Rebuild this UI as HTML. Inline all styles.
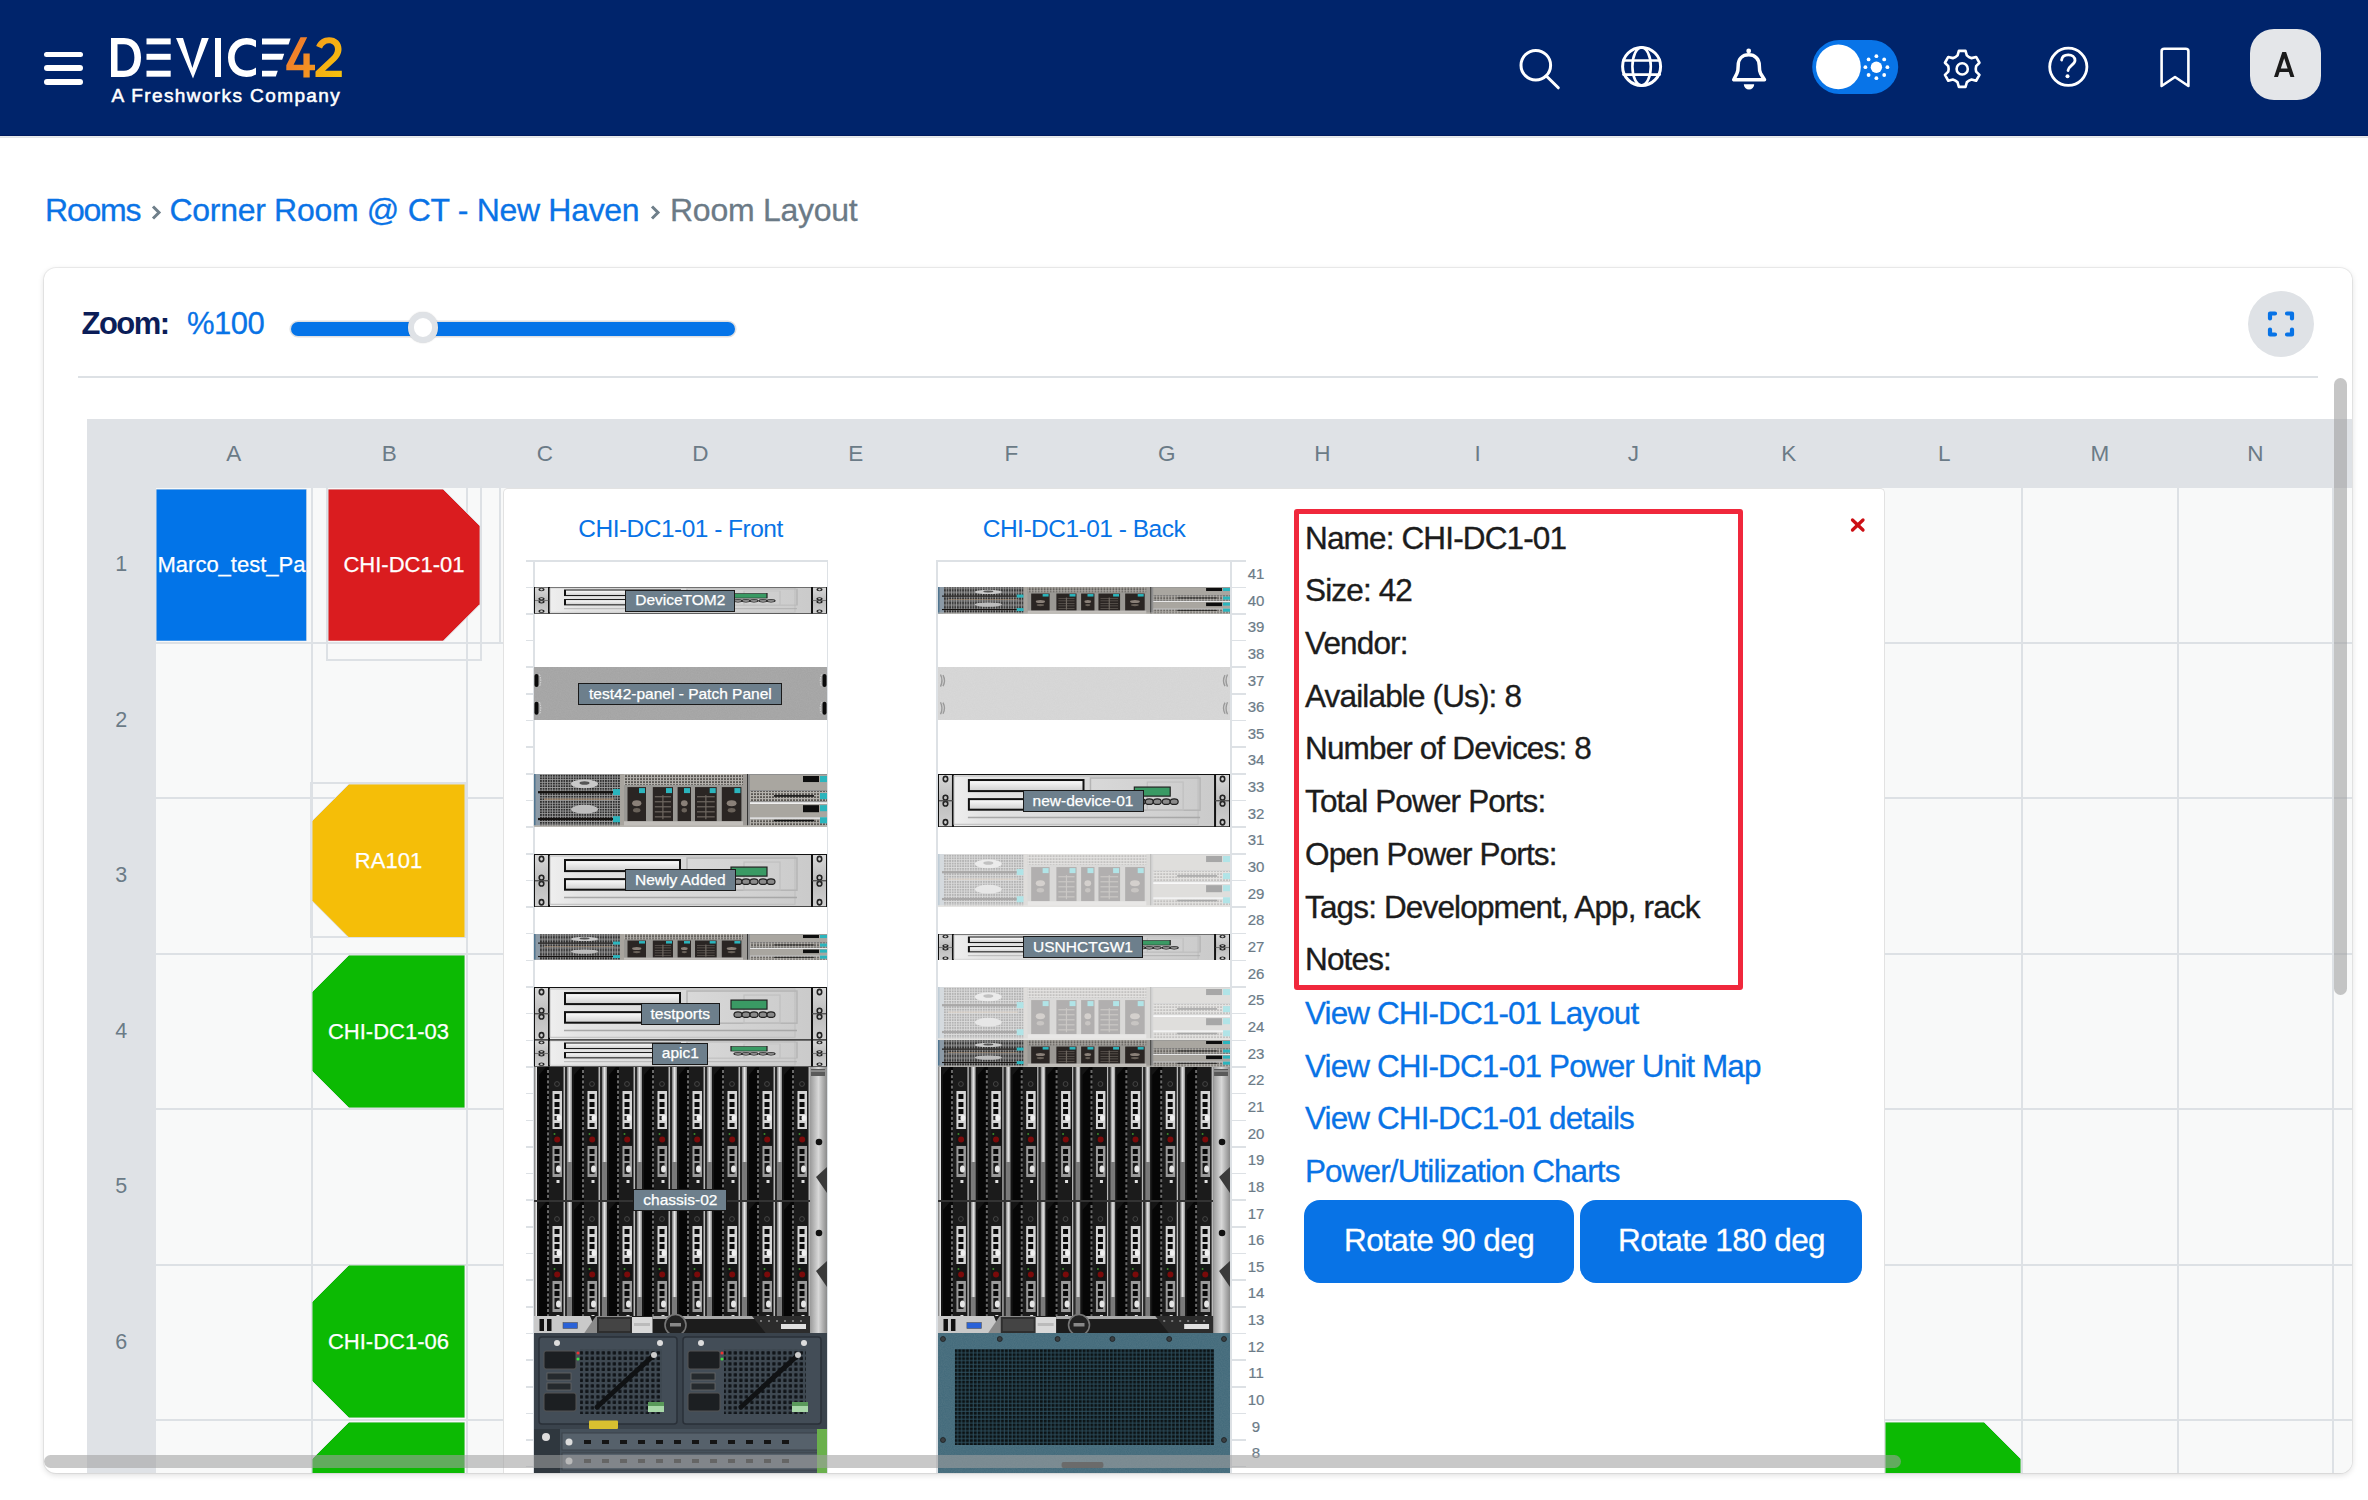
<!DOCTYPE html>
<html><head><meta charset="utf-8"><style>
*{box-sizing:border-box;margin:0;padding:0}
html,body{width:2368px;height:1500px;overflow:hidden;background:#fff;font-family:"Liberation Sans",sans-serif}
.abs{position:absolute}
#hdr{position:absolute;left:0;top:0;width:2368px;height:136px;background:#00246b;border-bottom:1px solid #001a5e}
#hdrline{position:absolute;left:0;top:136px;width:2368px;height:2px;background:linear-gradient(#eceded,#dfe2e6)}
.ham{position:absolute;left:44px;width:39px;height:5.8px;border-radius:3px;background:#fff}
#tag{position:absolute;left:111.5px;top:85.3px;color:#fff;font-size:19px;font-weight:normal;letter-spacing:1.4px;-webkit-text-stroke:0.55px #fff;white-space:nowrap;line-height:22px}
.crumb{position:absolute;top:193px;font-size:31.5px;line-height:36px;white-space:nowrap;color:#0a73e6}
#card{position:absolute;left:44px;top:268px;width:2308px;height:1205px;background:#fff;border-radius:12px;box-shadow:0 0 0 1px rgba(0,0,0,0.06),0 2px 6px rgba(0,0,0,0.14);overflow:hidden}
#inner{position:absolute;left:-44px;top:-268px;width:2368px;height:1500px}
.gl{position:absolute;background:#dde1e5}
.colh{position:absolute;top:419px;height:69px;line-height:69px;width:155.5px;text-align:center;color:#6b7b87;font-size:22.5px}
.rowh{position:absolute;left:87px;width:68.5px;height:155.5px;text-align:center;color:#6b7b87;font-size:21.5px}
.rack{position:absolute;color:#fff;-webkit-text-stroke:0.25px #fff;font-size:22px;text-align:center;white-space:nowrap;overflow:hidden}
.num{position:absolute;left:1238px;width:36px;text-align:center;font-size:15px;color:#6b7b87;line-height:16px;-webkit-text-stroke:0.2px #6b7b87}
.tick{position:absolute;height:1.5px;background:#dde1e5}
.lbl{position:absolute;background:#6d7f8c;border:1.5px solid #1a1a1a;color:#fff;-webkit-text-stroke:0.25px #fff;font-size:15.5px;line-height:19px;text-align:center;white-space:nowrap}
.btn{position:absolute;top:1199.5px;height:83px;background:#0873e6;border-radius:16px}
</style></head>
<body>

<svg width="0" height="0" style="position:absolute">
<defs>
  <linearGradient id="srvBody" x1="0" x2="1" y1="0" y2="0">
    <stop offset="0" stop-color="#f4f4f4"/><stop offset="0.15" stop-color="#e4e4e4"/><stop offset="1" stop-color="#c9c9c9"/>
  </linearGradient>
  <linearGradient id="srvEar" x1="0" x2="0" y1="0" y2="1">
    <stop offset="0" stop-color="#d8d8d8"/><stop offset="0.5" stop-color="#bdbdbd"/><stop offset="1" stop-color="#d0d0d0"/>
  </linearGradient>
  <linearGradient id="slotG" x1="0" x2="0" y1="0" y2="1">
    <stop offset="0" stop-color="#ffffff"/><stop offset="1" stop-color="#cfcfcf"/>
  </linearGradient>
  <symbol id="srv" viewBox="0 0 293 53" preserveAspectRatio="none">
    <rect x="0" y="0" width="293" height="53" fill="url(#srvBody)"/>
    <rect x="0" y="0" width="15" height="53" fill="url(#srvEar)"/>
    <rect x="278" y="0" width="15" height="53" fill="url(#srvEar)"/>
    <rect x="14" y="0" width="2" height="53" fill="#111"/>
    <rect x="277" y="0" width="2" height="53" fill="#111"/>
    <g fill="none" stroke="#222" stroke-width="1.6">
      <ellipse cx="7.5" cy="5" rx="2.2" ry="2.6"/><circle cx="7.5" cy="23.5" r="2.3"/><circle cx="7.5" cy="29.5" r="2.3"/><ellipse cx="7.5" cy="48" rx="2.2" ry="2.6"/>
      <ellipse cx="285.5" cy="5" rx="2.2" ry="2.6"/><circle cx="285.5" cy="23.5" r="2.3"/><circle cx="285.5" cy="29.5" r="2.3"/><ellipse cx="285.5" cy="48" rx="2.2" ry="2.6"/>
    </g>
    <rect x="0" y="26" width="15" height="1.2" fill="#444"/><rect x="278" y="26" width="15" height="1.2" fill="#444"/>
    <rect x="16" y="2" width="245" height="48" fill="none" stroke="#bdbdbd" stroke-width="1"/>
    <rect x="31" y="6" width="115" height="11" fill="url(#slotG)" stroke="#111" stroke-width="2"/>
    <rect x="31" y="25" width="115" height="10.5" fill="url(#slotG)" stroke="#111" stroke-width="2"/>
    <rect x="153" y="4" width="110" height="32" fill="none" stroke="#b5b5b5" stroke-width="1.5"/>
    <rect x="210" y="8" width="36" height="28" fill="none" stroke="#c0c0c0" stroke-width="1.2"/>
    <rect x="197" y="13" width="36" height="9" fill="#3a9a64" stroke="#222" stroke-width="1.2"/>
    <g fill="#8a8a8a" stroke="#222" stroke-width="1.2">
      <ellipse cx="204" cy="27.5" rx="4" ry="2.8"/><ellipse cx="212" cy="27.5" rx="4" ry="2.8"/><ellipse cx="220" cy="27.5" rx="4" ry="2.8"/><ellipse cx="229" cy="27.5" rx="4" ry="2.8"/><ellipse cx="237" cy="27.5" rx="4" ry="2.8"/>
    </g>
    <rect x="30" y="42.5" width="233" height="1.5" fill="#a8a8a8"/>
    <rect x="0" y="0" width="293" height="53" fill="none" stroke="#111" stroke-width="2"/>
  </symbol>
  <pattern id="mesh" width="2.6" height="2.6" patternUnits="userSpaceOnUse"><rect width="2.6" height="2.6" fill="#a0a0a0"/><rect x="0.8" y="0.8" width="1.8" height="1.8" fill="#2e2e2e"/></pattern>
  <pattern id="mesh2" width="3" height="3" patternUnits="userSpaceOnUse"><rect width="3" height="3" fill="#b5b2ad"/><rect x="1" y="1" width="2" height="2" fill="#5a5753"/></pattern>
  
  <filter id="noise" x="0" y="0" width="100%" height="100%">
    <feTurbulence type="fractalNoise" baseFrequency="0.9" numOctaves="2" seed="3"/>
    <feColorMatrix type="matrix" values="0 0 0 0 0.5  0 0 0 0 0.5  0 0 0 0 0.5  0 0 0 0.35 0"/>
    <feComposite in2="SourceGraphic" operator="in"/>
  </filter>
  <symbol id="ppFront" viewBox="0 0 293 53" preserveAspectRatio="none">
    <rect width="293" height="53" fill="#a2a2a2"/>
    <rect width="293" height="53" fill="#a8a8a8" filter="url(#noise)"/>
    <g fill="#0a0a0a"><rect x="0.5" y="7" width="4" height="13" rx="2"/><rect x="0.5" y="34.5" width="4" height="13" rx="2"/><rect x="288.5" y="7" width="4" height="13" rx="2"/><rect x="288.5" y="34.5" width="4" height="13" rx="2"/></g>
    <g fill="none" stroke="#e8e8e8" stroke-width="0.8" stroke-dasharray="1.5 1"><path d="M5.5,7.5 Q8,13.5 5.5,19.5"/><path d="M5.5,35 Q8,41 5.5,47"/><path d="M287.5,7.5 Q285,13.5 287.5,19.5"/><path d="M287.5,35 Q285,41 287.5,47"/></g>
  </symbol>
  <symbol id="ppBack" viewBox="0 0 293 53" preserveAspectRatio="none">
    <rect width="293" height="53" fill="#d9d9d9"/>
    <rect width="293" height="53" fill="#dcdcdc" filter="url(#noise)" opacity="0.5"/>
    <g fill="none" stroke="#9a9a9a" stroke-width="1.4"><path d="M2.5,7.5 Q5.5,13.5 2.5,19.5"/><path d="M5,8 Q8,13.5 5,19"/><path d="M2.5,35 Q5.5,41 2.5,47"/><path d="M5,35.5 Q8,41 5,46.5"/>
    <path d="M290.5,7.5 Q287.5,13.5 290.5,19.5"/><path d="M288,8 Q285,13.5 288,19"/><path d="M290.5,35 Q287.5,41 290.5,47"/><path d="M288,35.5 Q285,41 288,46.5"/></g>
  </symbol>
  <linearGradient id="bladeBar" x1="0" x2="1" y1="0" y2="0">
    <stop offset="0" stop-color="#777"/><stop offset="0.5" stop-color="#e6e6e6"/><stop offset="1" stop-color="#888"/>
  </linearGradient>
  <linearGradient id="sideStrip" x1="0" x2="1" y1="0" y2="0">
    <stop offset="0" stop-color="#9a9a9a"/><stop offset="0.5" stop-color="#d8d8d8"/><stop offset="1" stop-color="#8a8a8a"/>
  </linearGradient>
  
  
  <pattern id="grill" width="3.9" height="3.9" patternUnits="userSpaceOnUse">
    <rect width="3.9" height="3.9" fill="#2f5262"/><rect x="0.7" y="0.7" width="3" height="3" fill="#0b1214"/>
  </pattern>
  <pattern id="grill2" width="5.5" height="5.5" patternUnits="userSpaceOnUse" x="0.5" y="0.5">
    <rect width="5.5" height="5.5" fill="#3f4952"/><rect x="1.2" y="1.2" width="3.3" height="3.3" rx="0.6" fill="#101418"/>
  </pattern>
  <symbol id="cisco" viewBox="0 0 293 140" preserveAspectRatio="none">
    <rect width="293" height="140" fill="#3a434c"/>
    <rect x="5" y="4" width="138" height="87" rx="3" fill="#434d57" stroke="#2a3038" stroke-width="1.5"/>
    <rect x="149" y="4" width="138" height="87" rx="3" fill="#434d57" stroke="#2a3038" stroke-width="1.5"/>
    <g>
      <rect x="46" y="16" width="82" height="65" fill="url(#grill2)"/>
      <rect x="190" y="16" width="82" height="65" fill="url(#grill2)"/>
      <rect x="10" y="18" width="32" height="18" rx="2" fill="#1c1f22" stroke="#555" stroke-width="1"/>
      <rect x="10" y="60" width="32" height="18" rx="2" fill="#1c1f22" stroke="#555" stroke-width="1"/>
      <rect x="13" y="40" width="24" height="7" fill="#252a2e" stroke="#666" stroke-width="0.8"/>
      <rect x="13" y="50" width="24" height="7" fill="#252a2e" stroke="#666" stroke-width="0.8"/>
      <rect x="154" y="18" width="32" height="18" rx="2" fill="#1c1f22" stroke="#555" stroke-width="1"/>
      <rect x="154" y="60" width="32" height="18" rx="2" fill="#1c1f22" stroke="#555" stroke-width="1"/>
      <rect x="157" y="40" width="24" height="7" fill="#252a2e" stroke="#666" stroke-width="0.8"/>
      <rect x="157" y="50" width="24" height="7" fill="#252a2e" stroke="#666" stroke-width="0.8"/>
      <line x1="63" y1="74" x2="120" y2="22" stroke="#101214" stroke-width="5" stroke-linecap="round"/>
      <line x1="207" y1="74" x2="264" y2="22" stroke="#101214" stroke-width="5" stroke-linecap="round"/>
      <circle cx="120" cy="22" r="3" fill="#ccc"/><circle cx="264" cy="22" r="3" fill="#ccc"/>
      <circle cx="23" cy="10" r="3" fill="#ddd"/><circle cx="126" cy="10" r="3" fill="#ddd"/>
      <circle cx="167" cy="10" r="3" fill="#ddd"/><circle cx="270" cy="10" r="3" fill="#ddd"/>
      <rect x="114" y="69" width="16" height="10" fill="#a8d8a8"/><rect x="258" y="69" width="16" height="10" fill="#a8d8a8"/><rect x="114" y="69" width="16" height="4" fill="#5a9a5a"/><rect x="258" y="69" width="16" height="4" fill="#5a9a5a"/>
      <circle cx="44" cy="20" r="1.5" fill="#e33"/><circle cx="44" cy="26" r="1.5" fill="#4d4"/><circle cx="188" cy="20" r="1.5" fill="#e33"/><circle cx="188" cy="26" r="1.5" fill="#4d4"/>
    </g>
    
    <rect x="0" y="96" width="293" height="44" fill="#46515b"/>
    <rect x="0" y="96" width="26" height="44" fill="#2f373e"/>
    <circle cx="12" cy="104" r="4" fill="#ddd"/>
    <rect x="28" y="100" width="258" height="17" fill="#56616b" stroke="#3a434a" stroke-width="1"/>
    <rect x="28" y="120" width="258" height="17" fill="#56616b" stroke="#3a434a" stroke-width="1"/>
    <circle cx="35" cy="109" r="3.5" fill="#ddd"/><circle cx="35" cy="128" r="3.5" fill="#ddd"/>
    <g fill="#151515">
      <rect x="50" y="107" width="7" height="4"/><rect x="68" y="107" width="7" height="4"/><rect x="86" y="107" width="7" height="4"/><rect x="104" y="107" width="7" height="4"/><rect x="122" y="107" width="7" height="4"/><rect x="140" y="107" width="7" height="4"/><rect x="158" y="107" width="7" height="4"/><rect x="176" y="107" width="7" height="4"/><rect x="194" y="107" width="7" height="4"/><rect x="212" y="107" width="7" height="4"/><rect x="230" y="107" width="7" height="4"/><rect x="248" y="107" width="7" height="4"/>
      <rect x="50" y="126" width="7" height="4"/><rect x="68" y="126" width="7" height="4"/><rect x="86" y="126" width="7" height="4"/><rect x="104" y="126" width="7" height="4"/><rect x="122" y="126" width="7" height="4"/><rect x="140" y="126" width="7" height="4"/><rect x="158" y="126" width="7" height="4"/><rect x="176" y="126" width="7" height="4"/><rect x="194" y="126" width="7" height="4"/><rect x="212" y="126" width="7" height="4"/><rect x="230" y="126" width="7" height="4"/><rect x="248" y="126" width="7" height="4"/>
    </g>
    <rect x="283" y="96" width="10" height="44" fill="#6ab04c"/><rect x="55" y="87.5" width="29" height="8.5" rx="1" fill="#d8c030"/>
  </symbol>
  <symbol id="teal" viewBox="0 0 293 140" preserveAspectRatio="none">
    <rect width="293" height="140" fill="#40697a"/>
    <rect width="293" height="140" fill="#40697a" filter="url(#noise)" opacity="0.4"/>
    <rect x="17" y="16" width="260" height="96" fill="url(#grill)"/>
    <g fill="#3a3f42" stroke="#1a1f22" stroke-width="0.8">
      <circle cx="5" cy="6" r="2.5"/><circle cx="62" cy="6" r="2.5"/><circle cx="120" cy="6" r="2.5"/><circle cx="175" cy="6" r="2.5"/><circle cx="232" cy="6" r="2.5"/><circle cx="287" cy="6" r="2.5"/>
      <circle cx="5" cy="107" r="2.5"/><circle cx="287" cy="107" r="2.5"/>
    </g>
    <rect x="124" y="129" width="42" height="6" rx="2" fill="#222"/>
  </symbol>
<symbol id="photo" viewBox="0 0 293 53" preserveAspectRatio="none">
<rect width="293" height="53" fill="#9a9894"/>
<rect x="1" y="0" width="85" height="53" fill="url(#mesh)"/>
<rect x="0" y="0" width="6" height="53" fill="#8c9aa6"/><rect x="0" y="0" width="1.5" height="53" fill="#4f7590"/>
<ellipse cx="50.5" cy="9.8" rx="13.5" ry="4.3" fill="#c9c9c9"/><ellipse cx="50.5" cy="9" rx="5" ry="1.8" fill="#555"/>
<ellipse cx="50.5" cy="35" rx="13.5" ry="4.3" fill="#bdbdbd"/>
<rect x="4" y="17" width="76" height="2.2" fill="#151210"/><rect x="4" y="43.7" width="76" height="2.2" fill="#151210"/>
<rect x="10" y="24.5" width="70" height="1" fill="#b89a7a"/>
<rect x="79" y="15" width="7" height="6" fill="#2bb5bd"/><rect x="79" y="42" width="7" height="6" fill="#2bb5bd"/>
<rect x="86" y="0" width="4" height="53" fill="#a8a49e"/>
<rect x="90" y="0" width="128" height="11" fill="url(#mesh2)"/>
<rect x="90" y="11" width="128" height="36" fill="#9a9894"/>
<rect x="93.5" y="13" width="18.5" height="34" fill="#2a2523"/>
<rect x="105.0" y="14" width="6" height="5" fill="#2bb5bd"/>
<ellipse cx="102.75" cy="29" rx="4.625" ry="3" fill="#8a8078"/>
<ellipse cx="102.75" cy="36" rx="3.7" ry="2.2" fill="#6a625a"/>
<rect x="118.8" y="13" width="20.2" height="34" fill="#2a2523"/>
<rect x="132.0" y="14" width="6" height="5" fill="#2bb5bd"/>
<rect x="120.8" y="22" width="16.2" height="1.2" fill="#6e6760"/>
<rect x="120.8" y="27" width="16.2" height="1.2" fill="#6e6760"/>
<rect x="120.8" y="32" width="16.2" height="1.2" fill="#6e6760"/>
<rect x="120.8" y="37" width="16.2" height="1.2" fill="#6e6760"/>
<rect x="120.8" y="42" width="16.2" height="1.2" fill="#6e6760"/>
<rect x="128.3" y="21" width="1.2" height="24" fill="#6e6760"/>
<rect x="143.6" y="13" width="13.4" height="34" fill="#2a2523"/>
<rect x="150.0" y="14" width="6" height="5" fill="#2bb5bd"/>
<ellipse cx="150.29999999999998" cy="29" rx="3.35" ry="3" fill="#8a8078"/>
<ellipse cx="150.29999999999998" cy="36" rx="2.68" ry="2.2" fill="#6a625a"/>
<rect x="161" y="13" width="21.7" height="34" fill="#2a2523"/>
<rect x="175.7" y="14" width="6" height="5" fill="#2bb5bd"/>
<rect x="163" y="22" width="17.7" height="1.2" fill="#6e6760"/>
<rect x="163" y="27" width="17.7" height="1.2" fill="#6e6760"/>
<rect x="163" y="32" width="17.7" height="1.2" fill="#6e6760"/>
<rect x="163" y="37" width="17.7" height="1.2" fill="#6e6760"/>
<rect x="163" y="42" width="17.7" height="1.2" fill="#6e6760"/>
<rect x="171.25" y="21" width="1.2" height="24" fill="#6e6760"/>
<rect x="187.8" y="13" width="19.6" height="34" fill="#2a2523"/>
<rect x="200.4" y="14" width="6" height="5" fill="#2bb5bd"/>
<ellipse cx="197.60000000000002" cy="29" rx="4.9" ry="3" fill="#8a8078"/>
<ellipse cx="197.60000000000002" cy="36" rx="3.9200000000000004" ry="2.2" fill="#6a625a"/>
<rect x="90" y="47" width="128" height="6" fill="#c2bfbb"/>
<rect x="209" y="0" width="5" height="53" fill="#9d9a96"/><rect x="213" y="0" width="1.5" height="53" fill="#333"/>
<rect x="214" y="0" width="79" height="53" fill="#8f8f8f"/>
<rect x="216" y="1" width="77" height="15" fill="#a9a6a0"/>
<rect x="216" y="17" width="77" height="10" fill="url(#mesh2)"/>
<rect x="216" y="28" width="77" height="2" fill="#eeeeee"/>
<rect x="216" y="30" width="77" height="13" fill="#a9a6a0"/>
<rect x="216" y="43" width="77" height="2" fill="#dddddd"/>
<rect x="216" y="45" width="77" height="8" fill="url(#mesh2)"/>
<rect x="269" y="2" width="16" height="6" fill="#0e0e0e"/><rect x="269" y="31" width="16" height="7" fill="#0e0e0e"/>
<rect x="240" y="21" width="40" height="1.6" fill="#111"/><rect x="240" y="45.5" width="40" height="1.6" fill="#111"/>
<g fill="#2bb5bd"><rect x="286" y="2" width="7" height="6"/><rect x="286" y="19" width="7" height="6"/><rect x="286" y="31" width="7" height="6"/><rect x="286" y="43" width="7" height="6"/></g>
<rect x="0" y="51" width="293" height="2" fill="#b8b5b0"/>
</symbol><symbol id="chassis" viewBox="0 0 293 266.5" preserveAspectRatio="none">
<rect width="293" height="266.5" fill="#2a2a2a"/>
<clipPath id="row1"><rect x="0" y="0" width="276" height="133"/></clipPath>
<clipPath id="row2"><rect x="0" y="135" width="276" height="114"/></clipPath>
<rect x="0" y="0" width="5" height="249" fill="url(#bladeBar)"/>
<g clip-path="url(#row1)"><rect x="3" y="0" width="37" height="133" fill="#141414"/><path d="M5,8 L12,0 H29 V133 H5 Z" fill="#060606"/><rect x="15" y="0" width="14" height="133" fill="#1b1b1b"/><rect x="13" y="3.0" width="2" height="3" fill="#6a6a6a"/><rect x="13" y="8.2" width="2" height="3" fill="#6a6a6a"/><rect x="13" y="13.4" width="2" height="3" fill="#6a6a6a"/><rect x="13" y="18.6" width="2" height="3" fill="#6a6a6a"/><rect x="13" y="23.8" width="2" height="3" fill="#6a6a6a"/><rect x="13" y="29.0" width="2" height="3" fill="#6a6a6a"/><rect x="13" y="34.2" width="2" height="3" fill="#6a6a6a"/><rect x="13" y="39.4" width="2" height="3" fill="#6a6a6a"/><rect x="13" y="44.6" width="2" height="3" fill="#6a6a6a"/><rect x="13" y="49.8" width="2" height="3" fill="#6a6a6a"/><rect x="13" y="55.0" width="2" height="3" fill="#6a6a6a"/><rect x="13" y="60.2" width="2" height="3" fill="#6a6a6a"/><rect x="13" y="65.4" width="2" height="3" fill="#6a6a6a"/><rect x="13" y="70.6" width="2" height="3" fill="#6a6a6a"/><rect x="13" y="75.8" width="2" height="3" fill="#6a6a6a"/><rect x="13" y="81.0" width="2" height="3" fill="#6a6a6a"/><rect x="13" y="86.2" width="2" height="3" fill="#6a6a6a"/><rect x="13" y="91.4" width="2" height="3" fill="#6a6a6a"/><rect x="13" y="96.6" width="2" height="3" fill="#6a6a6a"/><rect x="13" y="101.8" width="2" height="3" fill="#6a6a6a"/><rect x="13" y="107.0" width="2" height="3" fill="#6a6a6a"/><rect x="13" y="112.2" width="2" height="3" fill="#6a6a6a"/><rect x="13" y="117.4" width="2" height="3" fill="#6a6a6a"/><rect x="13" y="122.6" width="2" height="3" fill="#6a6a6a"/><rect x="13" y="127.8" width="2" height="3" fill="#6a6a6a"/><circle cx="23" cy="17" r="2.4" fill="none" stroke="#4a4a4a" stroke-width="0.9"/><rect x="18.5" y="24" width="9.5" height="38" fill="#d4d4d4"/><rect x="20.5" y="27" width="5" height="5" fill="#0a0a0a"/><rect x="20.5" y="35" width="5" height="5" fill="#0a0a0a"/><rect x="20.5" y="42" width="5" height="5" fill="#0a0a0a"/><rect x="20.5" y="49" width="2.5" height="4" fill="#222"/><ellipse cx="25" cy="51" rx="2.5" ry="3" fill="#f0f0f0"/><rect x="20.5" y="56" width="5" height="4" fill="#111"/><rect x="18.5" y="62" width="9.5" height="16" fill="#151515"/><circle cx="20.5" cy="67" r="1" fill="#3a8a2a"/><circle cx="23.2" cy="72.5" r="3" fill="#7a0a0a"/><rect x="18.5" y="79" width="9.5" height="31" fill="#9a9a9a"/><rect x="20.5" y="82" width="5" height="5" fill="#0a0a0a"/><rect x="20.5" y="89" width="5" height="5" fill="#0a0a0a"/><rect x="20.5" y="96" width="5" height="11" fill="#1a1a1a"/><ellipse cx="24.5" cy="102" rx="2.5" ry="3.5" fill="#e6e6e6"/><rect x="22.5" y="113" width="3" height="3" fill="#e0e0e0"/><rect x="29.5" y="0" width="1.5" height="133" fill="#b9b9b9"/><rect x="31" y="0" width="2" height="133" fill="#2a2a2a"/><rect x="33" y="0" width="5" height="95" fill="url(#bladeBar)"/><rect x="33" y="95" width="5" height="38" fill="#7a7a7a"/><rect x="38" y="0" width="2" height="133" fill="#555"/><rect x="38" y="0" width="37" height="133" fill="#141414"/><path d="M40,8 L47,0 H64 V133 H40 Z" fill="#060606"/><rect x="50" y="0" width="14" height="133" fill="#1b1b1b"/><rect x="48" y="3.0" width="2" height="3" fill="#6a6a6a"/><rect x="48" y="8.2" width="2" height="3" fill="#6a6a6a"/><rect x="48" y="13.4" width="2" height="3" fill="#6a6a6a"/><rect x="48" y="18.6" width="2" height="3" fill="#6a6a6a"/><rect x="48" y="23.8" width="2" height="3" fill="#6a6a6a"/><rect x="48" y="29.0" width="2" height="3" fill="#6a6a6a"/><rect x="48" y="34.2" width="2" height="3" fill="#6a6a6a"/><rect x="48" y="39.4" width="2" height="3" fill="#6a6a6a"/><rect x="48" y="44.6" width="2" height="3" fill="#6a6a6a"/><rect x="48" y="49.8" width="2" height="3" fill="#6a6a6a"/><rect x="48" y="55.0" width="2" height="3" fill="#6a6a6a"/><rect x="48" y="60.2" width="2" height="3" fill="#6a6a6a"/><rect x="48" y="65.4" width="2" height="3" fill="#6a6a6a"/><rect x="48" y="70.6" width="2" height="3" fill="#6a6a6a"/><rect x="48" y="75.8" width="2" height="3" fill="#6a6a6a"/><rect x="48" y="81.0" width="2" height="3" fill="#6a6a6a"/><rect x="48" y="86.2" width="2" height="3" fill="#6a6a6a"/><rect x="48" y="91.4" width="2" height="3" fill="#6a6a6a"/><rect x="48" y="96.6" width="2" height="3" fill="#6a6a6a"/><rect x="48" y="101.8" width="2" height="3" fill="#6a6a6a"/><rect x="48" y="107.0" width="2" height="3" fill="#6a6a6a"/><rect x="48" y="112.2" width="2" height="3" fill="#6a6a6a"/><rect x="48" y="117.4" width="2" height="3" fill="#6a6a6a"/><rect x="48" y="122.6" width="2" height="3" fill="#6a6a6a"/><rect x="48" y="127.8" width="2" height="3" fill="#6a6a6a"/><circle cx="58" cy="17" r="2.4" fill="none" stroke="#4a4a4a" stroke-width="0.9"/><rect x="53.5" y="24" width="9.5" height="38" fill="#d4d4d4"/><rect x="55.5" y="27" width="5" height="5" fill="#0a0a0a"/><rect x="55.5" y="35" width="5" height="5" fill="#0a0a0a"/><rect x="55.5" y="42" width="5" height="5" fill="#0a0a0a"/><rect x="55.5" y="49" width="2.5" height="4" fill="#222"/><ellipse cx="60" cy="51" rx="2.5" ry="3" fill="#f0f0f0"/><rect x="55.5" y="56" width="5" height="4" fill="#111"/><rect x="53.5" y="62" width="9.5" height="16" fill="#151515"/><circle cx="55.5" cy="67" r="1" fill="#3a8a2a"/><circle cx="58.2" cy="72.5" r="3" fill="#7a0a0a"/><rect x="53.5" y="79" width="9.5" height="31" fill="#9a9a9a"/><rect x="55.5" y="82" width="5" height="5" fill="#0a0a0a"/><rect x="55.5" y="89" width="5" height="5" fill="#0a0a0a"/><rect x="55.5" y="96" width="5" height="11" fill="#1a1a1a"/><ellipse cx="59.5" cy="102" rx="2.5" ry="3.5" fill="#e6e6e6"/><rect x="57.5" y="113" width="3" height="3" fill="#e0e0e0"/><rect x="64.5" y="0" width="1.5" height="133" fill="#b9b9b9"/><rect x="66" y="0" width="2" height="133" fill="#2a2a2a"/><rect x="68" y="0" width="5" height="95" fill="url(#bladeBar)"/><rect x="68" y="95" width="5" height="38" fill="#7a7a7a"/><rect x="73" y="0" width="2" height="133" fill="#555"/><rect x="73" y="0" width="37" height="133" fill="#141414"/><path d="M75,8 L82,0 H99 V133 H75 Z" fill="#060606"/><rect x="85" y="0" width="14" height="133" fill="#1b1b1b"/><rect x="83" y="3.0" width="2" height="3" fill="#6a6a6a"/><rect x="83" y="8.2" width="2" height="3" fill="#6a6a6a"/><rect x="83" y="13.4" width="2" height="3" fill="#6a6a6a"/><rect x="83" y="18.6" width="2" height="3" fill="#6a6a6a"/><rect x="83" y="23.8" width="2" height="3" fill="#6a6a6a"/><rect x="83" y="29.0" width="2" height="3" fill="#6a6a6a"/><rect x="83" y="34.2" width="2" height="3" fill="#6a6a6a"/><rect x="83" y="39.4" width="2" height="3" fill="#6a6a6a"/><rect x="83" y="44.6" width="2" height="3" fill="#6a6a6a"/><rect x="83" y="49.8" width="2" height="3" fill="#6a6a6a"/><rect x="83" y="55.0" width="2" height="3" fill="#6a6a6a"/><rect x="83" y="60.2" width="2" height="3" fill="#6a6a6a"/><rect x="83" y="65.4" width="2" height="3" fill="#6a6a6a"/><rect x="83" y="70.6" width="2" height="3" fill="#6a6a6a"/><rect x="83" y="75.8" width="2" height="3" fill="#6a6a6a"/><rect x="83" y="81.0" width="2" height="3" fill="#6a6a6a"/><rect x="83" y="86.2" width="2" height="3" fill="#6a6a6a"/><rect x="83" y="91.4" width="2" height="3" fill="#6a6a6a"/><rect x="83" y="96.6" width="2" height="3" fill="#6a6a6a"/><rect x="83" y="101.8" width="2" height="3" fill="#6a6a6a"/><rect x="83" y="107.0" width="2" height="3" fill="#6a6a6a"/><rect x="83" y="112.2" width="2" height="3" fill="#6a6a6a"/><rect x="83" y="117.4" width="2" height="3" fill="#6a6a6a"/><rect x="83" y="122.6" width="2" height="3" fill="#6a6a6a"/><rect x="83" y="127.8" width="2" height="3" fill="#6a6a6a"/><circle cx="93" cy="17" r="2.4" fill="none" stroke="#4a4a4a" stroke-width="0.9"/><rect x="88.5" y="24" width="9.5" height="38" fill="#d4d4d4"/><rect x="90.5" y="27" width="5" height="5" fill="#0a0a0a"/><rect x="90.5" y="35" width="5" height="5" fill="#0a0a0a"/><rect x="90.5" y="42" width="5" height="5" fill="#0a0a0a"/><rect x="90.5" y="49" width="2.5" height="4" fill="#222"/><ellipse cx="95" cy="51" rx="2.5" ry="3" fill="#f0f0f0"/><rect x="90.5" y="56" width="5" height="4" fill="#111"/><rect x="88.5" y="62" width="9.5" height="16" fill="#151515"/><circle cx="90.5" cy="67" r="1" fill="#3a8a2a"/><circle cx="93.2" cy="72.5" r="3" fill="#7a0a0a"/><rect x="88.5" y="79" width="9.5" height="31" fill="#9a9a9a"/><rect x="90.5" y="82" width="5" height="5" fill="#0a0a0a"/><rect x="90.5" y="89" width="5" height="5" fill="#0a0a0a"/><rect x="90.5" y="96" width="5" height="11" fill="#1a1a1a"/><ellipse cx="94.5" cy="102" rx="2.5" ry="3.5" fill="#e6e6e6"/><rect x="92.5" y="113" width="3" height="3" fill="#e0e0e0"/><rect x="99.5" y="0" width="1.5" height="133" fill="#b9b9b9"/><rect x="101" y="0" width="2" height="133" fill="#2a2a2a"/><rect x="103" y="0" width="5" height="95" fill="url(#bladeBar)"/><rect x="103" y="95" width="5" height="38" fill="#7a7a7a"/><rect x="108" y="0" width="2" height="133" fill="#555"/><rect x="108" y="0" width="37" height="133" fill="#141414"/><path d="M110,8 L117,0 H134 V133 H110 Z" fill="#060606"/><rect x="120" y="0" width="14" height="133" fill="#1b1b1b"/><rect x="118" y="3.0" width="2" height="3" fill="#6a6a6a"/><rect x="118" y="8.2" width="2" height="3" fill="#6a6a6a"/><rect x="118" y="13.4" width="2" height="3" fill="#6a6a6a"/><rect x="118" y="18.6" width="2" height="3" fill="#6a6a6a"/><rect x="118" y="23.8" width="2" height="3" fill="#6a6a6a"/><rect x="118" y="29.0" width="2" height="3" fill="#6a6a6a"/><rect x="118" y="34.2" width="2" height="3" fill="#6a6a6a"/><rect x="118" y="39.4" width="2" height="3" fill="#6a6a6a"/><rect x="118" y="44.6" width="2" height="3" fill="#6a6a6a"/><rect x="118" y="49.8" width="2" height="3" fill="#6a6a6a"/><rect x="118" y="55.0" width="2" height="3" fill="#6a6a6a"/><rect x="118" y="60.2" width="2" height="3" fill="#6a6a6a"/><rect x="118" y="65.4" width="2" height="3" fill="#6a6a6a"/><rect x="118" y="70.6" width="2" height="3" fill="#6a6a6a"/><rect x="118" y="75.8" width="2" height="3" fill="#6a6a6a"/><rect x="118" y="81.0" width="2" height="3" fill="#6a6a6a"/><rect x="118" y="86.2" width="2" height="3" fill="#6a6a6a"/><rect x="118" y="91.4" width="2" height="3" fill="#6a6a6a"/><rect x="118" y="96.6" width="2" height="3" fill="#6a6a6a"/><rect x="118" y="101.8" width="2" height="3" fill="#6a6a6a"/><rect x="118" y="107.0" width="2" height="3" fill="#6a6a6a"/><rect x="118" y="112.2" width="2" height="3" fill="#6a6a6a"/><rect x="118" y="117.4" width="2" height="3" fill="#6a6a6a"/><rect x="118" y="122.6" width="2" height="3" fill="#6a6a6a"/><rect x="118" y="127.8" width="2" height="3" fill="#6a6a6a"/><circle cx="128" cy="17" r="2.4" fill="none" stroke="#4a4a4a" stroke-width="0.9"/><rect x="123.5" y="24" width="9.5" height="38" fill="#d4d4d4"/><rect x="125.5" y="27" width="5" height="5" fill="#0a0a0a"/><rect x="125.5" y="35" width="5" height="5" fill="#0a0a0a"/><rect x="125.5" y="42" width="5" height="5" fill="#0a0a0a"/><rect x="125.5" y="49" width="2.5" height="4" fill="#222"/><ellipse cx="130" cy="51" rx="2.5" ry="3" fill="#f0f0f0"/><rect x="125.5" y="56" width="5" height="4" fill="#111"/><rect x="123.5" y="62" width="9.5" height="16" fill="#151515"/><circle cx="125.5" cy="67" r="1" fill="#3a8a2a"/><circle cx="128.2" cy="72.5" r="3" fill="#7a0a0a"/><rect x="123.5" y="79" width="9.5" height="31" fill="#9a9a9a"/><rect x="125.5" y="82" width="5" height="5" fill="#0a0a0a"/><rect x="125.5" y="89" width="5" height="5" fill="#0a0a0a"/><rect x="125.5" y="96" width="5" height="11" fill="#1a1a1a"/><ellipse cx="129.5" cy="102" rx="2.5" ry="3.5" fill="#e6e6e6"/><rect x="127.5" y="113" width="3" height="3" fill="#e0e0e0"/><rect x="134.5" y="0" width="1.5" height="133" fill="#b9b9b9"/><rect x="136" y="0" width="2" height="133" fill="#2a2a2a"/><rect x="138" y="0" width="5" height="95" fill="url(#bladeBar)"/><rect x="138" y="95" width="5" height="38" fill="#7a7a7a"/><rect x="143" y="0" width="2" height="133" fill="#555"/><rect x="143" y="0" width="37" height="133" fill="#141414"/><path d="M145,8 L152,0 H169 V133 H145 Z" fill="#060606"/><rect x="155" y="0" width="14" height="133" fill="#1b1b1b"/><rect x="153" y="3.0" width="2" height="3" fill="#6a6a6a"/><rect x="153" y="8.2" width="2" height="3" fill="#6a6a6a"/><rect x="153" y="13.4" width="2" height="3" fill="#6a6a6a"/><rect x="153" y="18.6" width="2" height="3" fill="#6a6a6a"/><rect x="153" y="23.8" width="2" height="3" fill="#6a6a6a"/><rect x="153" y="29.0" width="2" height="3" fill="#6a6a6a"/><rect x="153" y="34.2" width="2" height="3" fill="#6a6a6a"/><rect x="153" y="39.4" width="2" height="3" fill="#6a6a6a"/><rect x="153" y="44.6" width="2" height="3" fill="#6a6a6a"/><rect x="153" y="49.8" width="2" height="3" fill="#6a6a6a"/><rect x="153" y="55.0" width="2" height="3" fill="#6a6a6a"/><rect x="153" y="60.2" width="2" height="3" fill="#6a6a6a"/><rect x="153" y="65.4" width="2" height="3" fill="#6a6a6a"/><rect x="153" y="70.6" width="2" height="3" fill="#6a6a6a"/><rect x="153" y="75.8" width="2" height="3" fill="#6a6a6a"/><rect x="153" y="81.0" width="2" height="3" fill="#6a6a6a"/><rect x="153" y="86.2" width="2" height="3" fill="#6a6a6a"/><rect x="153" y="91.4" width="2" height="3" fill="#6a6a6a"/><rect x="153" y="96.6" width="2" height="3" fill="#6a6a6a"/><rect x="153" y="101.8" width="2" height="3" fill="#6a6a6a"/><rect x="153" y="107.0" width="2" height="3" fill="#6a6a6a"/><rect x="153" y="112.2" width="2" height="3" fill="#6a6a6a"/><rect x="153" y="117.4" width="2" height="3" fill="#6a6a6a"/><rect x="153" y="122.6" width="2" height="3" fill="#6a6a6a"/><rect x="153" y="127.8" width="2" height="3" fill="#6a6a6a"/><circle cx="163" cy="17" r="2.4" fill="none" stroke="#4a4a4a" stroke-width="0.9"/><rect x="158.5" y="24" width="9.5" height="38" fill="#d4d4d4"/><rect x="160.5" y="27" width="5" height="5" fill="#0a0a0a"/><rect x="160.5" y="35" width="5" height="5" fill="#0a0a0a"/><rect x="160.5" y="42" width="5" height="5" fill="#0a0a0a"/><rect x="160.5" y="49" width="2.5" height="4" fill="#222"/><ellipse cx="165" cy="51" rx="2.5" ry="3" fill="#f0f0f0"/><rect x="160.5" y="56" width="5" height="4" fill="#111"/><rect x="158.5" y="62" width="9.5" height="16" fill="#151515"/><circle cx="160.5" cy="67" r="1" fill="#3a8a2a"/><circle cx="163.2" cy="72.5" r="3" fill="#7a0a0a"/><rect x="158.5" y="79" width="9.5" height="31" fill="#9a9a9a"/><rect x="160.5" y="82" width="5" height="5" fill="#0a0a0a"/><rect x="160.5" y="89" width="5" height="5" fill="#0a0a0a"/><rect x="160.5" y="96" width="5" height="11" fill="#1a1a1a"/><ellipse cx="164.5" cy="102" rx="2.5" ry="3.5" fill="#e6e6e6"/><rect x="162.5" y="113" width="3" height="3" fill="#e0e0e0"/><rect x="169.5" y="0" width="1.5" height="133" fill="#b9b9b9"/><rect x="171" y="0" width="2" height="133" fill="#2a2a2a"/><rect x="173" y="0" width="5" height="95" fill="url(#bladeBar)"/><rect x="173" y="95" width="5" height="38" fill="#7a7a7a"/><rect x="178" y="0" width="2" height="133" fill="#555"/><rect x="178" y="0" width="37" height="133" fill="#141414"/><path d="M180,8 L187,0 H204 V133 H180 Z" fill="#060606"/><rect x="190" y="0" width="14" height="133" fill="#1b1b1b"/><rect x="188" y="3.0" width="2" height="3" fill="#6a6a6a"/><rect x="188" y="8.2" width="2" height="3" fill="#6a6a6a"/><rect x="188" y="13.4" width="2" height="3" fill="#6a6a6a"/><rect x="188" y="18.6" width="2" height="3" fill="#6a6a6a"/><rect x="188" y="23.8" width="2" height="3" fill="#6a6a6a"/><rect x="188" y="29.0" width="2" height="3" fill="#6a6a6a"/><rect x="188" y="34.2" width="2" height="3" fill="#6a6a6a"/><rect x="188" y="39.4" width="2" height="3" fill="#6a6a6a"/><rect x="188" y="44.6" width="2" height="3" fill="#6a6a6a"/><rect x="188" y="49.8" width="2" height="3" fill="#6a6a6a"/><rect x="188" y="55.0" width="2" height="3" fill="#6a6a6a"/><rect x="188" y="60.2" width="2" height="3" fill="#6a6a6a"/><rect x="188" y="65.4" width="2" height="3" fill="#6a6a6a"/><rect x="188" y="70.6" width="2" height="3" fill="#6a6a6a"/><rect x="188" y="75.8" width="2" height="3" fill="#6a6a6a"/><rect x="188" y="81.0" width="2" height="3" fill="#6a6a6a"/><rect x="188" y="86.2" width="2" height="3" fill="#6a6a6a"/><rect x="188" y="91.4" width="2" height="3" fill="#6a6a6a"/><rect x="188" y="96.6" width="2" height="3" fill="#6a6a6a"/><rect x="188" y="101.8" width="2" height="3" fill="#6a6a6a"/><rect x="188" y="107.0" width="2" height="3" fill="#6a6a6a"/><rect x="188" y="112.2" width="2" height="3" fill="#6a6a6a"/><rect x="188" y="117.4" width="2" height="3" fill="#6a6a6a"/><rect x="188" y="122.6" width="2" height="3" fill="#6a6a6a"/><rect x="188" y="127.8" width="2" height="3" fill="#6a6a6a"/><circle cx="198" cy="17" r="2.4" fill="none" stroke="#4a4a4a" stroke-width="0.9"/><rect x="193.5" y="24" width="9.5" height="38" fill="#d4d4d4"/><rect x="195.5" y="27" width="5" height="5" fill="#0a0a0a"/><rect x="195.5" y="35" width="5" height="5" fill="#0a0a0a"/><rect x="195.5" y="42" width="5" height="5" fill="#0a0a0a"/><rect x="195.5" y="49" width="2.5" height="4" fill="#222"/><ellipse cx="200" cy="51" rx="2.5" ry="3" fill="#f0f0f0"/><rect x="195.5" y="56" width="5" height="4" fill="#111"/><rect x="193.5" y="62" width="9.5" height="16" fill="#151515"/><circle cx="195.5" cy="67" r="1" fill="#3a8a2a"/><circle cx="198.2" cy="72.5" r="3" fill="#7a0a0a"/><rect x="193.5" y="79" width="9.5" height="31" fill="#9a9a9a"/><rect x="195.5" y="82" width="5" height="5" fill="#0a0a0a"/><rect x="195.5" y="89" width="5" height="5" fill="#0a0a0a"/><rect x="195.5" y="96" width="5" height="11" fill="#1a1a1a"/><ellipse cx="199.5" cy="102" rx="2.5" ry="3.5" fill="#e6e6e6"/><rect x="197.5" y="113" width="3" height="3" fill="#e0e0e0"/><rect x="204.5" y="0" width="1.5" height="133" fill="#b9b9b9"/><rect x="206" y="0" width="2" height="133" fill="#2a2a2a"/><rect x="208" y="0" width="5" height="95" fill="url(#bladeBar)"/><rect x="208" y="95" width="5" height="38" fill="#7a7a7a"/><rect x="213" y="0" width="2" height="133" fill="#555"/><rect x="213" y="0" width="37" height="133" fill="#141414"/><path d="M215,8 L222,0 H239 V133 H215 Z" fill="#060606"/><rect x="225" y="0" width="14" height="133" fill="#1b1b1b"/><rect x="223" y="3.0" width="2" height="3" fill="#6a6a6a"/><rect x="223" y="8.2" width="2" height="3" fill="#6a6a6a"/><rect x="223" y="13.4" width="2" height="3" fill="#6a6a6a"/><rect x="223" y="18.6" width="2" height="3" fill="#6a6a6a"/><rect x="223" y="23.8" width="2" height="3" fill="#6a6a6a"/><rect x="223" y="29.0" width="2" height="3" fill="#6a6a6a"/><rect x="223" y="34.2" width="2" height="3" fill="#6a6a6a"/><rect x="223" y="39.4" width="2" height="3" fill="#6a6a6a"/><rect x="223" y="44.6" width="2" height="3" fill="#6a6a6a"/><rect x="223" y="49.8" width="2" height="3" fill="#6a6a6a"/><rect x="223" y="55.0" width="2" height="3" fill="#6a6a6a"/><rect x="223" y="60.2" width="2" height="3" fill="#6a6a6a"/><rect x="223" y="65.4" width="2" height="3" fill="#6a6a6a"/><rect x="223" y="70.6" width="2" height="3" fill="#6a6a6a"/><rect x="223" y="75.8" width="2" height="3" fill="#6a6a6a"/><rect x="223" y="81.0" width="2" height="3" fill="#6a6a6a"/><rect x="223" y="86.2" width="2" height="3" fill="#6a6a6a"/><rect x="223" y="91.4" width="2" height="3" fill="#6a6a6a"/><rect x="223" y="96.6" width="2" height="3" fill="#6a6a6a"/><rect x="223" y="101.8" width="2" height="3" fill="#6a6a6a"/><rect x="223" y="107.0" width="2" height="3" fill="#6a6a6a"/><rect x="223" y="112.2" width="2" height="3" fill="#6a6a6a"/><rect x="223" y="117.4" width="2" height="3" fill="#6a6a6a"/><rect x="223" y="122.6" width="2" height="3" fill="#6a6a6a"/><rect x="223" y="127.8" width="2" height="3" fill="#6a6a6a"/><circle cx="233" cy="17" r="2.4" fill="none" stroke="#4a4a4a" stroke-width="0.9"/><rect x="228.5" y="24" width="9.5" height="38" fill="#d4d4d4"/><rect x="230.5" y="27" width="5" height="5" fill="#0a0a0a"/><rect x="230.5" y="35" width="5" height="5" fill="#0a0a0a"/><rect x="230.5" y="42" width="5" height="5" fill="#0a0a0a"/><rect x="230.5" y="49" width="2.5" height="4" fill="#222"/><ellipse cx="235" cy="51" rx="2.5" ry="3" fill="#f0f0f0"/><rect x="230.5" y="56" width="5" height="4" fill="#111"/><rect x="228.5" y="62" width="9.5" height="16" fill="#151515"/><circle cx="230.5" cy="67" r="1" fill="#3a8a2a"/><circle cx="233.2" cy="72.5" r="3" fill="#7a0a0a"/><rect x="228.5" y="79" width="9.5" height="31" fill="#9a9a9a"/><rect x="230.5" y="82" width="5" height="5" fill="#0a0a0a"/><rect x="230.5" y="89" width="5" height="5" fill="#0a0a0a"/><rect x="230.5" y="96" width="5" height="11" fill="#1a1a1a"/><ellipse cx="234.5" cy="102" rx="2.5" ry="3.5" fill="#e6e6e6"/><rect x="232.5" y="113" width="3" height="3" fill="#e0e0e0"/><rect x="239.5" y="0" width="1.5" height="133" fill="#b9b9b9"/><rect x="241" y="0" width="2" height="133" fill="#2a2a2a"/><rect x="243" y="0" width="5" height="95" fill="url(#bladeBar)"/><rect x="243" y="95" width="5" height="38" fill="#7a7a7a"/><rect x="248" y="0" width="2" height="133" fill="#555"/><rect x="248" y="0" width="37" height="133" fill="#141414"/><path d="M250,8 L257,0 H274 V133 H250 Z" fill="#060606"/><rect x="260" y="0" width="14" height="133" fill="#1b1b1b"/><rect x="258" y="3.0" width="2" height="3" fill="#6a6a6a"/><rect x="258" y="8.2" width="2" height="3" fill="#6a6a6a"/><rect x="258" y="13.4" width="2" height="3" fill="#6a6a6a"/><rect x="258" y="18.6" width="2" height="3" fill="#6a6a6a"/><rect x="258" y="23.8" width="2" height="3" fill="#6a6a6a"/><rect x="258" y="29.0" width="2" height="3" fill="#6a6a6a"/><rect x="258" y="34.2" width="2" height="3" fill="#6a6a6a"/><rect x="258" y="39.4" width="2" height="3" fill="#6a6a6a"/><rect x="258" y="44.6" width="2" height="3" fill="#6a6a6a"/><rect x="258" y="49.8" width="2" height="3" fill="#6a6a6a"/><rect x="258" y="55.0" width="2" height="3" fill="#6a6a6a"/><rect x="258" y="60.2" width="2" height="3" fill="#6a6a6a"/><rect x="258" y="65.4" width="2" height="3" fill="#6a6a6a"/><rect x="258" y="70.6" width="2" height="3" fill="#6a6a6a"/><rect x="258" y="75.8" width="2" height="3" fill="#6a6a6a"/><rect x="258" y="81.0" width="2" height="3" fill="#6a6a6a"/><rect x="258" y="86.2" width="2" height="3" fill="#6a6a6a"/><rect x="258" y="91.4" width="2" height="3" fill="#6a6a6a"/><rect x="258" y="96.6" width="2" height="3" fill="#6a6a6a"/><rect x="258" y="101.8" width="2" height="3" fill="#6a6a6a"/><rect x="258" y="107.0" width="2" height="3" fill="#6a6a6a"/><rect x="258" y="112.2" width="2" height="3" fill="#6a6a6a"/><rect x="258" y="117.4" width="2" height="3" fill="#6a6a6a"/><rect x="258" y="122.6" width="2" height="3" fill="#6a6a6a"/><rect x="258" y="127.8" width="2" height="3" fill="#6a6a6a"/><circle cx="268" cy="17" r="2.4" fill="none" stroke="#4a4a4a" stroke-width="0.9"/><rect x="263.5" y="24" width="9.5" height="38" fill="#d4d4d4"/><rect x="265.5" y="27" width="5" height="5" fill="#0a0a0a"/><rect x="265.5" y="35" width="5" height="5" fill="#0a0a0a"/><rect x="265.5" y="42" width="5" height="5" fill="#0a0a0a"/><rect x="265.5" y="49" width="2.5" height="4" fill="#222"/><ellipse cx="270" cy="51" rx="2.5" ry="3" fill="#f0f0f0"/><rect x="265.5" y="56" width="5" height="4" fill="#111"/><rect x="263.5" y="62" width="9.5" height="16" fill="#151515"/><circle cx="265.5" cy="67" r="1" fill="#3a8a2a"/><circle cx="268.2" cy="72.5" r="3" fill="#7a0a0a"/><rect x="263.5" y="79" width="9.5" height="31" fill="#9a9a9a"/><rect x="265.5" y="82" width="5" height="5" fill="#0a0a0a"/><rect x="265.5" y="89" width="5" height="5" fill="#0a0a0a"/><rect x="265.5" y="96" width="5" height="11" fill="#1a1a1a"/><ellipse cx="269.5" cy="102" rx="2.5" ry="3.5" fill="#e6e6e6"/><rect x="267.5" y="113" width="3" height="3" fill="#e0e0e0"/><rect x="274.5" y="0" width="1.5" height="133" fill="#b9b9b9"/><rect x="276" y="0" width="2" height="133" fill="#2a2a2a"/><rect x="278" y="0" width="5" height="95" fill="url(#bladeBar)"/><rect x="278" y="95" width="5" height="38" fill="#7a7a7a"/><rect x="283" y="0" width="2" height="133" fill="#555"/></g>
<g clip-path="url(#row2)"><rect x="3" y="135" width="37" height="133" fill="#141414"/><path d="M5,143 L12,135 H29 V268 H5 Z" fill="#060606"/><rect x="15" y="135" width="14" height="133" fill="#1b1b1b"/><rect x="13" y="138.0" width="2" height="3" fill="#6a6a6a"/><rect x="13" y="143.2" width="2" height="3" fill="#6a6a6a"/><rect x="13" y="148.4" width="2" height="3" fill="#6a6a6a"/><rect x="13" y="153.6" width="2" height="3" fill="#6a6a6a"/><rect x="13" y="158.8" width="2" height="3" fill="#6a6a6a"/><rect x="13" y="164.0" width="2" height="3" fill="#6a6a6a"/><rect x="13" y="169.2" width="2" height="3" fill="#6a6a6a"/><rect x="13" y="174.4" width="2" height="3" fill="#6a6a6a"/><rect x="13" y="179.6" width="2" height="3" fill="#6a6a6a"/><rect x="13" y="184.8" width="2" height="3" fill="#6a6a6a"/><rect x="13" y="190.0" width="2" height="3" fill="#6a6a6a"/><rect x="13" y="195.2" width="2" height="3" fill="#6a6a6a"/><rect x="13" y="200.4" width="2" height="3" fill="#6a6a6a"/><rect x="13" y="205.6" width="2" height="3" fill="#6a6a6a"/><rect x="13" y="210.8" width="2" height="3" fill="#6a6a6a"/><rect x="13" y="216.0" width="2" height="3" fill="#6a6a6a"/><rect x="13" y="221.2" width="2" height="3" fill="#6a6a6a"/><rect x="13" y="226.4" width="2" height="3" fill="#6a6a6a"/><rect x="13" y="231.6" width="2" height="3" fill="#6a6a6a"/><rect x="13" y="236.8" width="2" height="3" fill="#6a6a6a"/><rect x="13" y="242.0" width="2" height="3" fill="#6a6a6a"/><rect x="13" y="247.2" width="2" height="3" fill="#6a6a6a"/><rect x="13" y="252.4" width="2" height="3" fill="#6a6a6a"/><rect x="13" y="257.6" width="2" height="3" fill="#6a6a6a"/><rect x="13" y="262.8" width="2" height="3" fill="#6a6a6a"/><circle cx="23" cy="152" r="2.4" fill="none" stroke="#4a4a4a" stroke-width="0.9"/><rect x="18.5" y="159" width="9.5" height="38" fill="#d4d4d4"/><rect x="20.5" y="162" width="5" height="5" fill="#0a0a0a"/><rect x="20.5" y="170" width="5" height="5" fill="#0a0a0a"/><rect x="20.5" y="177" width="5" height="5" fill="#0a0a0a"/><rect x="20.5" y="184" width="2.5" height="4" fill="#222"/><ellipse cx="25" cy="186" rx="2.5" ry="3" fill="#f0f0f0"/><rect x="20.5" y="191" width="5" height="4" fill="#111"/><rect x="18.5" y="197" width="9.5" height="16" fill="#151515"/><circle cx="20.5" cy="202" r="1" fill="#3a8a2a"/><circle cx="23.2" cy="207.5" r="3" fill="#7a0a0a"/><rect x="18.5" y="214" width="9.5" height="31" fill="#9a9a9a"/><rect x="20.5" y="217" width="5" height="5" fill="#0a0a0a"/><rect x="20.5" y="224" width="5" height="5" fill="#0a0a0a"/><rect x="20.5" y="231" width="5" height="11" fill="#1a1a1a"/><ellipse cx="24.5" cy="237" rx="2.5" ry="3.5" fill="#e6e6e6"/><rect x="22.5" y="248" width="3" height="3" fill="#e0e0e0"/><rect x="29.5" y="135" width="1.5" height="133" fill="#b9b9b9"/><rect x="31" y="135" width="2" height="133" fill="#2a2a2a"/><rect x="33" y="135" width="5" height="95" fill="url(#bladeBar)"/><rect x="33" y="230" width="5" height="38" fill="#7a7a7a"/><rect x="38" y="135" width="2" height="133" fill="#555"/><rect x="38" y="135" width="37" height="133" fill="#141414"/><path d="M40,143 L47,135 H64 V268 H40 Z" fill="#060606"/><rect x="50" y="135" width="14" height="133" fill="#1b1b1b"/><rect x="48" y="138.0" width="2" height="3" fill="#6a6a6a"/><rect x="48" y="143.2" width="2" height="3" fill="#6a6a6a"/><rect x="48" y="148.4" width="2" height="3" fill="#6a6a6a"/><rect x="48" y="153.6" width="2" height="3" fill="#6a6a6a"/><rect x="48" y="158.8" width="2" height="3" fill="#6a6a6a"/><rect x="48" y="164.0" width="2" height="3" fill="#6a6a6a"/><rect x="48" y="169.2" width="2" height="3" fill="#6a6a6a"/><rect x="48" y="174.4" width="2" height="3" fill="#6a6a6a"/><rect x="48" y="179.6" width="2" height="3" fill="#6a6a6a"/><rect x="48" y="184.8" width="2" height="3" fill="#6a6a6a"/><rect x="48" y="190.0" width="2" height="3" fill="#6a6a6a"/><rect x="48" y="195.2" width="2" height="3" fill="#6a6a6a"/><rect x="48" y="200.4" width="2" height="3" fill="#6a6a6a"/><rect x="48" y="205.6" width="2" height="3" fill="#6a6a6a"/><rect x="48" y="210.8" width="2" height="3" fill="#6a6a6a"/><rect x="48" y="216.0" width="2" height="3" fill="#6a6a6a"/><rect x="48" y="221.2" width="2" height="3" fill="#6a6a6a"/><rect x="48" y="226.4" width="2" height="3" fill="#6a6a6a"/><rect x="48" y="231.6" width="2" height="3" fill="#6a6a6a"/><rect x="48" y="236.8" width="2" height="3" fill="#6a6a6a"/><rect x="48" y="242.0" width="2" height="3" fill="#6a6a6a"/><rect x="48" y="247.2" width="2" height="3" fill="#6a6a6a"/><rect x="48" y="252.4" width="2" height="3" fill="#6a6a6a"/><rect x="48" y="257.6" width="2" height="3" fill="#6a6a6a"/><rect x="48" y="262.8" width="2" height="3" fill="#6a6a6a"/><circle cx="58" cy="152" r="2.4" fill="none" stroke="#4a4a4a" stroke-width="0.9"/><rect x="53.5" y="159" width="9.5" height="38" fill="#d4d4d4"/><rect x="55.5" y="162" width="5" height="5" fill="#0a0a0a"/><rect x="55.5" y="170" width="5" height="5" fill="#0a0a0a"/><rect x="55.5" y="177" width="5" height="5" fill="#0a0a0a"/><rect x="55.5" y="184" width="2.5" height="4" fill="#222"/><ellipse cx="60" cy="186" rx="2.5" ry="3" fill="#f0f0f0"/><rect x="55.5" y="191" width="5" height="4" fill="#111"/><rect x="53.5" y="197" width="9.5" height="16" fill="#151515"/><circle cx="55.5" cy="202" r="1" fill="#3a8a2a"/><circle cx="58.2" cy="207.5" r="3" fill="#7a0a0a"/><rect x="53.5" y="214" width="9.5" height="31" fill="#9a9a9a"/><rect x="55.5" y="217" width="5" height="5" fill="#0a0a0a"/><rect x="55.5" y="224" width="5" height="5" fill="#0a0a0a"/><rect x="55.5" y="231" width="5" height="11" fill="#1a1a1a"/><ellipse cx="59.5" cy="237" rx="2.5" ry="3.5" fill="#e6e6e6"/><rect x="57.5" y="248" width="3" height="3" fill="#e0e0e0"/><rect x="64.5" y="135" width="1.5" height="133" fill="#b9b9b9"/><rect x="66" y="135" width="2" height="133" fill="#2a2a2a"/><rect x="68" y="135" width="5" height="95" fill="url(#bladeBar)"/><rect x="68" y="230" width="5" height="38" fill="#7a7a7a"/><rect x="73" y="135" width="2" height="133" fill="#555"/><rect x="73" y="135" width="37" height="133" fill="#141414"/><path d="M75,143 L82,135 H99 V268 H75 Z" fill="#060606"/><rect x="85" y="135" width="14" height="133" fill="#1b1b1b"/><rect x="83" y="138.0" width="2" height="3" fill="#6a6a6a"/><rect x="83" y="143.2" width="2" height="3" fill="#6a6a6a"/><rect x="83" y="148.4" width="2" height="3" fill="#6a6a6a"/><rect x="83" y="153.6" width="2" height="3" fill="#6a6a6a"/><rect x="83" y="158.8" width="2" height="3" fill="#6a6a6a"/><rect x="83" y="164.0" width="2" height="3" fill="#6a6a6a"/><rect x="83" y="169.2" width="2" height="3" fill="#6a6a6a"/><rect x="83" y="174.4" width="2" height="3" fill="#6a6a6a"/><rect x="83" y="179.6" width="2" height="3" fill="#6a6a6a"/><rect x="83" y="184.8" width="2" height="3" fill="#6a6a6a"/><rect x="83" y="190.0" width="2" height="3" fill="#6a6a6a"/><rect x="83" y="195.2" width="2" height="3" fill="#6a6a6a"/><rect x="83" y="200.4" width="2" height="3" fill="#6a6a6a"/><rect x="83" y="205.6" width="2" height="3" fill="#6a6a6a"/><rect x="83" y="210.8" width="2" height="3" fill="#6a6a6a"/><rect x="83" y="216.0" width="2" height="3" fill="#6a6a6a"/><rect x="83" y="221.2" width="2" height="3" fill="#6a6a6a"/><rect x="83" y="226.4" width="2" height="3" fill="#6a6a6a"/><rect x="83" y="231.6" width="2" height="3" fill="#6a6a6a"/><rect x="83" y="236.8" width="2" height="3" fill="#6a6a6a"/><rect x="83" y="242.0" width="2" height="3" fill="#6a6a6a"/><rect x="83" y="247.2" width="2" height="3" fill="#6a6a6a"/><rect x="83" y="252.4" width="2" height="3" fill="#6a6a6a"/><rect x="83" y="257.6" width="2" height="3" fill="#6a6a6a"/><rect x="83" y="262.8" width="2" height="3" fill="#6a6a6a"/><circle cx="93" cy="152" r="2.4" fill="none" stroke="#4a4a4a" stroke-width="0.9"/><rect x="88.5" y="159" width="9.5" height="38" fill="#d4d4d4"/><rect x="90.5" y="162" width="5" height="5" fill="#0a0a0a"/><rect x="90.5" y="170" width="5" height="5" fill="#0a0a0a"/><rect x="90.5" y="177" width="5" height="5" fill="#0a0a0a"/><rect x="90.5" y="184" width="2.5" height="4" fill="#222"/><ellipse cx="95" cy="186" rx="2.5" ry="3" fill="#f0f0f0"/><rect x="90.5" y="191" width="5" height="4" fill="#111"/><rect x="88.5" y="197" width="9.5" height="16" fill="#151515"/><circle cx="90.5" cy="202" r="1" fill="#3a8a2a"/><circle cx="93.2" cy="207.5" r="3" fill="#7a0a0a"/><rect x="88.5" y="214" width="9.5" height="31" fill="#9a9a9a"/><rect x="90.5" y="217" width="5" height="5" fill="#0a0a0a"/><rect x="90.5" y="224" width="5" height="5" fill="#0a0a0a"/><rect x="90.5" y="231" width="5" height="11" fill="#1a1a1a"/><ellipse cx="94.5" cy="237" rx="2.5" ry="3.5" fill="#e6e6e6"/><rect x="92.5" y="248" width="3" height="3" fill="#e0e0e0"/><rect x="99.5" y="135" width="1.5" height="133" fill="#b9b9b9"/><rect x="101" y="135" width="2" height="133" fill="#2a2a2a"/><rect x="103" y="135" width="5" height="95" fill="url(#bladeBar)"/><rect x="103" y="230" width="5" height="38" fill="#7a7a7a"/><rect x="108" y="135" width="2" height="133" fill="#555"/><rect x="108" y="135" width="37" height="133" fill="#141414"/><path d="M110,143 L117,135 H134 V268 H110 Z" fill="#060606"/><rect x="120" y="135" width="14" height="133" fill="#1b1b1b"/><rect x="118" y="138.0" width="2" height="3" fill="#6a6a6a"/><rect x="118" y="143.2" width="2" height="3" fill="#6a6a6a"/><rect x="118" y="148.4" width="2" height="3" fill="#6a6a6a"/><rect x="118" y="153.6" width="2" height="3" fill="#6a6a6a"/><rect x="118" y="158.8" width="2" height="3" fill="#6a6a6a"/><rect x="118" y="164.0" width="2" height="3" fill="#6a6a6a"/><rect x="118" y="169.2" width="2" height="3" fill="#6a6a6a"/><rect x="118" y="174.4" width="2" height="3" fill="#6a6a6a"/><rect x="118" y="179.6" width="2" height="3" fill="#6a6a6a"/><rect x="118" y="184.8" width="2" height="3" fill="#6a6a6a"/><rect x="118" y="190.0" width="2" height="3" fill="#6a6a6a"/><rect x="118" y="195.2" width="2" height="3" fill="#6a6a6a"/><rect x="118" y="200.4" width="2" height="3" fill="#6a6a6a"/><rect x="118" y="205.6" width="2" height="3" fill="#6a6a6a"/><rect x="118" y="210.8" width="2" height="3" fill="#6a6a6a"/><rect x="118" y="216.0" width="2" height="3" fill="#6a6a6a"/><rect x="118" y="221.2" width="2" height="3" fill="#6a6a6a"/><rect x="118" y="226.4" width="2" height="3" fill="#6a6a6a"/><rect x="118" y="231.6" width="2" height="3" fill="#6a6a6a"/><rect x="118" y="236.8" width="2" height="3" fill="#6a6a6a"/><rect x="118" y="242.0" width="2" height="3" fill="#6a6a6a"/><rect x="118" y="247.2" width="2" height="3" fill="#6a6a6a"/><rect x="118" y="252.4" width="2" height="3" fill="#6a6a6a"/><rect x="118" y="257.6" width="2" height="3" fill="#6a6a6a"/><rect x="118" y="262.8" width="2" height="3" fill="#6a6a6a"/><circle cx="128" cy="152" r="2.4" fill="none" stroke="#4a4a4a" stroke-width="0.9"/><rect x="123.5" y="159" width="9.5" height="38" fill="#d4d4d4"/><rect x="125.5" y="162" width="5" height="5" fill="#0a0a0a"/><rect x="125.5" y="170" width="5" height="5" fill="#0a0a0a"/><rect x="125.5" y="177" width="5" height="5" fill="#0a0a0a"/><rect x="125.5" y="184" width="2.5" height="4" fill="#222"/><ellipse cx="130" cy="186" rx="2.5" ry="3" fill="#f0f0f0"/><rect x="125.5" y="191" width="5" height="4" fill="#111"/><rect x="123.5" y="197" width="9.5" height="16" fill="#151515"/><circle cx="125.5" cy="202" r="1" fill="#3a8a2a"/><circle cx="128.2" cy="207.5" r="3" fill="#7a0a0a"/><rect x="123.5" y="214" width="9.5" height="31" fill="#9a9a9a"/><rect x="125.5" y="217" width="5" height="5" fill="#0a0a0a"/><rect x="125.5" y="224" width="5" height="5" fill="#0a0a0a"/><rect x="125.5" y="231" width="5" height="11" fill="#1a1a1a"/><ellipse cx="129.5" cy="237" rx="2.5" ry="3.5" fill="#e6e6e6"/><rect x="127.5" y="248" width="3" height="3" fill="#e0e0e0"/><rect x="134.5" y="135" width="1.5" height="133" fill="#b9b9b9"/><rect x="136" y="135" width="2" height="133" fill="#2a2a2a"/><rect x="138" y="135" width="5" height="95" fill="url(#bladeBar)"/><rect x="138" y="230" width="5" height="38" fill="#7a7a7a"/><rect x="143" y="135" width="2" height="133" fill="#555"/><rect x="143" y="135" width="37" height="133" fill="#141414"/><path d="M145,143 L152,135 H169 V268 H145 Z" fill="#060606"/><rect x="155" y="135" width="14" height="133" fill="#1b1b1b"/><rect x="153" y="138.0" width="2" height="3" fill="#6a6a6a"/><rect x="153" y="143.2" width="2" height="3" fill="#6a6a6a"/><rect x="153" y="148.4" width="2" height="3" fill="#6a6a6a"/><rect x="153" y="153.6" width="2" height="3" fill="#6a6a6a"/><rect x="153" y="158.8" width="2" height="3" fill="#6a6a6a"/><rect x="153" y="164.0" width="2" height="3" fill="#6a6a6a"/><rect x="153" y="169.2" width="2" height="3" fill="#6a6a6a"/><rect x="153" y="174.4" width="2" height="3" fill="#6a6a6a"/><rect x="153" y="179.6" width="2" height="3" fill="#6a6a6a"/><rect x="153" y="184.8" width="2" height="3" fill="#6a6a6a"/><rect x="153" y="190.0" width="2" height="3" fill="#6a6a6a"/><rect x="153" y="195.2" width="2" height="3" fill="#6a6a6a"/><rect x="153" y="200.4" width="2" height="3" fill="#6a6a6a"/><rect x="153" y="205.6" width="2" height="3" fill="#6a6a6a"/><rect x="153" y="210.8" width="2" height="3" fill="#6a6a6a"/><rect x="153" y="216.0" width="2" height="3" fill="#6a6a6a"/><rect x="153" y="221.2" width="2" height="3" fill="#6a6a6a"/><rect x="153" y="226.4" width="2" height="3" fill="#6a6a6a"/><rect x="153" y="231.6" width="2" height="3" fill="#6a6a6a"/><rect x="153" y="236.8" width="2" height="3" fill="#6a6a6a"/><rect x="153" y="242.0" width="2" height="3" fill="#6a6a6a"/><rect x="153" y="247.2" width="2" height="3" fill="#6a6a6a"/><rect x="153" y="252.4" width="2" height="3" fill="#6a6a6a"/><rect x="153" y="257.6" width="2" height="3" fill="#6a6a6a"/><rect x="153" y="262.8" width="2" height="3" fill="#6a6a6a"/><circle cx="163" cy="152" r="2.4" fill="none" stroke="#4a4a4a" stroke-width="0.9"/><rect x="158.5" y="159" width="9.5" height="38" fill="#d4d4d4"/><rect x="160.5" y="162" width="5" height="5" fill="#0a0a0a"/><rect x="160.5" y="170" width="5" height="5" fill="#0a0a0a"/><rect x="160.5" y="177" width="5" height="5" fill="#0a0a0a"/><rect x="160.5" y="184" width="2.5" height="4" fill="#222"/><ellipse cx="165" cy="186" rx="2.5" ry="3" fill="#f0f0f0"/><rect x="160.5" y="191" width="5" height="4" fill="#111"/><rect x="158.5" y="197" width="9.5" height="16" fill="#151515"/><circle cx="160.5" cy="202" r="1" fill="#3a8a2a"/><circle cx="163.2" cy="207.5" r="3" fill="#7a0a0a"/><rect x="158.5" y="214" width="9.5" height="31" fill="#9a9a9a"/><rect x="160.5" y="217" width="5" height="5" fill="#0a0a0a"/><rect x="160.5" y="224" width="5" height="5" fill="#0a0a0a"/><rect x="160.5" y="231" width="5" height="11" fill="#1a1a1a"/><ellipse cx="164.5" cy="237" rx="2.5" ry="3.5" fill="#e6e6e6"/><rect x="162.5" y="248" width="3" height="3" fill="#e0e0e0"/><rect x="169.5" y="135" width="1.5" height="133" fill="#b9b9b9"/><rect x="171" y="135" width="2" height="133" fill="#2a2a2a"/><rect x="173" y="135" width="5" height="95" fill="url(#bladeBar)"/><rect x="173" y="230" width="5" height="38" fill="#7a7a7a"/><rect x="178" y="135" width="2" height="133" fill="#555"/><rect x="178" y="135" width="37" height="133" fill="#141414"/><path d="M180,143 L187,135 H204 V268 H180 Z" fill="#060606"/><rect x="190" y="135" width="14" height="133" fill="#1b1b1b"/><rect x="188" y="138.0" width="2" height="3" fill="#6a6a6a"/><rect x="188" y="143.2" width="2" height="3" fill="#6a6a6a"/><rect x="188" y="148.4" width="2" height="3" fill="#6a6a6a"/><rect x="188" y="153.6" width="2" height="3" fill="#6a6a6a"/><rect x="188" y="158.8" width="2" height="3" fill="#6a6a6a"/><rect x="188" y="164.0" width="2" height="3" fill="#6a6a6a"/><rect x="188" y="169.2" width="2" height="3" fill="#6a6a6a"/><rect x="188" y="174.4" width="2" height="3" fill="#6a6a6a"/><rect x="188" y="179.6" width="2" height="3" fill="#6a6a6a"/><rect x="188" y="184.8" width="2" height="3" fill="#6a6a6a"/><rect x="188" y="190.0" width="2" height="3" fill="#6a6a6a"/><rect x="188" y="195.2" width="2" height="3" fill="#6a6a6a"/><rect x="188" y="200.4" width="2" height="3" fill="#6a6a6a"/><rect x="188" y="205.6" width="2" height="3" fill="#6a6a6a"/><rect x="188" y="210.8" width="2" height="3" fill="#6a6a6a"/><rect x="188" y="216.0" width="2" height="3" fill="#6a6a6a"/><rect x="188" y="221.2" width="2" height="3" fill="#6a6a6a"/><rect x="188" y="226.4" width="2" height="3" fill="#6a6a6a"/><rect x="188" y="231.6" width="2" height="3" fill="#6a6a6a"/><rect x="188" y="236.8" width="2" height="3" fill="#6a6a6a"/><rect x="188" y="242.0" width="2" height="3" fill="#6a6a6a"/><rect x="188" y="247.2" width="2" height="3" fill="#6a6a6a"/><rect x="188" y="252.4" width="2" height="3" fill="#6a6a6a"/><rect x="188" y="257.6" width="2" height="3" fill="#6a6a6a"/><rect x="188" y="262.8" width="2" height="3" fill="#6a6a6a"/><circle cx="198" cy="152" r="2.4" fill="none" stroke="#4a4a4a" stroke-width="0.9"/><rect x="193.5" y="159" width="9.5" height="38" fill="#d4d4d4"/><rect x="195.5" y="162" width="5" height="5" fill="#0a0a0a"/><rect x="195.5" y="170" width="5" height="5" fill="#0a0a0a"/><rect x="195.5" y="177" width="5" height="5" fill="#0a0a0a"/><rect x="195.5" y="184" width="2.5" height="4" fill="#222"/><ellipse cx="200" cy="186" rx="2.5" ry="3" fill="#f0f0f0"/><rect x="195.5" y="191" width="5" height="4" fill="#111"/><rect x="193.5" y="197" width="9.5" height="16" fill="#151515"/><circle cx="195.5" cy="202" r="1" fill="#3a8a2a"/><circle cx="198.2" cy="207.5" r="3" fill="#7a0a0a"/><rect x="193.5" y="214" width="9.5" height="31" fill="#9a9a9a"/><rect x="195.5" y="217" width="5" height="5" fill="#0a0a0a"/><rect x="195.5" y="224" width="5" height="5" fill="#0a0a0a"/><rect x="195.5" y="231" width="5" height="11" fill="#1a1a1a"/><ellipse cx="199.5" cy="237" rx="2.5" ry="3.5" fill="#e6e6e6"/><rect x="197.5" y="248" width="3" height="3" fill="#e0e0e0"/><rect x="204.5" y="135" width="1.5" height="133" fill="#b9b9b9"/><rect x="206" y="135" width="2" height="133" fill="#2a2a2a"/><rect x="208" y="135" width="5" height="95" fill="url(#bladeBar)"/><rect x="208" y="230" width="5" height="38" fill="#7a7a7a"/><rect x="213" y="135" width="2" height="133" fill="#555"/><rect x="213" y="135" width="37" height="133" fill="#141414"/><path d="M215,143 L222,135 H239 V268 H215 Z" fill="#060606"/><rect x="225" y="135" width="14" height="133" fill="#1b1b1b"/><rect x="223" y="138.0" width="2" height="3" fill="#6a6a6a"/><rect x="223" y="143.2" width="2" height="3" fill="#6a6a6a"/><rect x="223" y="148.4" width="2" height="3" fill="#6a6a6a"/><rect x="223" y="153.6" width="2" height="3" fill="#6a6a6a"/><rect x="223" y="158.8" width="2" height="3" fill="#6a6a6a"/><rect x="223" y="164.0" width="2" height="3" fill="#6a6a6a"/><rect x="223" y="169.2" width="2" height="3" fill="#6a6a6a"/><rect x="223" y="174.4" width="2" height="3" fill="#6a6a6a"/><rect x="223" y="179.6" width="2" height="3" fill="#6a6a6a"/><rect x="223" y="184.8" width="2" height="3" fill="#6a6a6a"/><rect x="223" y="190.0" width="2" height="3" fill="#6a6a6a"/><rect x="223" y="195.2" width="2" height="3" fill="#6a6a6a"/><rect x="223" y="200.4" width="2" height="3" fill="#6a6a6a"/><rect x="223" y="205.6" width="2" height="3" fill="#6a6a6a"/><rect x="223" y="210.8" width="2" height="3" fill="#6a6a6a"/><rect x="223" y="216.0" width="2" height="3" fill="#6a6a6a"/><rect x="223" y="221.2" width="2" height="3" fill="#6a6a6a"/><rect x="223" y="226.4" width="2" height="3" fill="#6a6a6a"/><rect x="223" y="231.6" width="2" height="3" fill="#6a6a6a"/><rect x="223" y="236.8" width="2" height="3" fill="#6a6a6a"/><rect x="223" y="242.0" width="2" height="3" fill="#6a6a6a"/><rect x="223" y="247.2" width="2" height="3" fill="#6a6a6a"/><rect x="223" y="252.4" width="2" height="3" fill="#6a6a6a"/><rect x="223" y="257.6" width="2" height="3" fill="#6a6a6a"/><rect x="223" y="262.8" width="2" height="3" fill="#6a6a6a"/><circle cx="233" cy="152" r="2.4" fill="none" stroke="#4a4a4a" stroke-width="0.9"/><rect x="228.5" y="159" width="9.5" height="38" fill="#d4d4d4"/><rect x="230.5" y="162" width="5" height="5" fill="#0a0a0a"/><rect x="230.5" y="170" width="5" height="5" fill="#0a0a0a"/><rect x="230.5" y="177" width="5" height="5" fill="#0a0a0a"/><rect x="230.5" y="184" width="2.5" height="4" fill="#222"/><ellipse cx="235" cy="186" rx="2.5" ry="3" fill="#f0f0f0"/><rect x="230.5" y="191" width="5" height="4" fill="#111"/><rect x="228.5" y="197" width="9.5" height="16" fill="#151515"/><circle cx="230.5" cy="202" r="1" fill="#3a8a2a"/><circle cx="233.2" cy="207.5" r="3" fill="#7a0a0a"/><rect x="228.5" y="214" width="9.5" height="31" fill="#9a9a9a"/><rect x="230.5" y="217" width="5" height="5" fill="#0a0a0a"/><rect x="230.5" y="224" width="5" height="5" fill="#0a0a0a"/><rect x="230.5" y="231" width="5" height="11" fill="#1a1a1a"/><ellipse cx="234.5" cy="237" rx="2.5" ry="3.5" fill="#e6e6e6"/><rect x="232.5" y="248" width="3" height="3" fill="#e0e0e0"/><rect x="239.5" y="135" width="1.5" height="133" fill="#b9b9b9"/><rect x="241" y="135" width="2" height="133" fill="#2a2a2a"/><rect x="243" y="135" width="5" height="95" fill="url(#bladeBar)"/><rect x="243" y="230" width="5" height="38" fill="#7a7a7a"/><rect x="248" y="135" width="2" height="133" fill="#555"/><rect x="248" y="135" width="37" height="133" fill="#141414"/><path d="M250,143 L257,135 H274 V268 H250 Z" fill="#060606"/><rect x="260" y="135" width="14" height="133" fill="#1b1b1b"/><rect x="258" y="138.0" width="2" height="3" fill="#6a6a6a"/><rect x="258" y="143.2" width="2" height="3" fill="#6a6a6a"/><rect x="258" y="148.4" width="2" height="3" fill="#6a6a6a"/><rect x="258" y="153.6" width="2" height="3" fill="#6a6a6a"/><rect x="258" y="158.8" width="2" height="3" fill="#6a6a6a"/><rect x="258" y="164.0" width="2" height="3" fill="#6a6a6a"/><rect x="258" y="169.2" width="2" height="3" fill="#6a6a6a"/><rect x="258" y="174.4" width="2" height="3" fill="#6a6a6a"/><rect x="258" y="179.6" width="2" height="3" fill="#6a6a6a"/><rect x="258" y="184.8" width="2" height="3" fill="#6a6a6a"/><rect x="258" y="190.0" width="2" height="3" fill="#6a6a6a"/><rect x="258" y="195.2" width="2" height="3" fill="#6a6a6a"/><rect x="258" y="200.4" width="2" height="3" fill="#6a6a6a"/><rect x="258" y="205.6" width="2" height="3" fill="#6a6a6a"/><rect x="258" y="210.8" width="2" height="3" fill="#6a6a6a"/><rect x="258" y="216.0" width="2" height="3" fill="#6a6a6a"/><rect x="258" y="221.2" width="2" height="3" fill="#6a6a6a"/><rect x="258" y="226.4" width="2" height="3" fill="#6a6a6a"/><rect x="258" y="231.6" width="2" height="3" fill="#6a6a6a"/><rect x="258" y="236.8" width="2" height="3" fill="#6a6a6a"/><rect x="258" y="242.0" width="2" height="3" fill="#6a6a6a"/><rect x="258" y="247.2" width="2" height="3" fill="#6a6a6a"/><rect x="258" y="252.4" width="2" height="3" fill="#6a6a6a"/><rect x="258" y="257.6" width="2" height="3" fill="#6a6a6a"/><rect x="258" y="262.8" width="2" height="3" fill="#6a6a6a"/><circle cx="268" cy="152" r="2.4" fill="none" stroke="#4a4a4a" stroke-width="0.9"/><rect x="263.5" y="159" width="9.5" height="38" fill="#d4d4d4"/><rect x="265.5" y="162" width="5" height="5" fill="#0a0a0a"/><rect x="265.5" y="170" width="5" height="5" fill="#0a0a0a"/><rect x="265.5" y="177" width="5" height="5" fill="#0a0a0a"/><rect x="265.5" y="184" width="2.5" height="4" fill="#222"/><ellipse cx="270" cy="186" rx="2.5" ry="3" fill="#f0f0f0"/><rect x="265.5" y="191" width="5" height="4" fill="#111"/><rect x="263.5" y="197" width="9.5" height="16" fill="#151515"/><circle cx="265.5" cy="202" r="1" fill="#3a8a2a"/><circle cx="268.2" cy="207.5" r="3" fill="#7a0a0a"/><rect x="263.5" y="214" width="9.5" height="31" fill="#9a9a9a"/><rect x="265.5" y="217" width="5" height="5" fill="#0a0a0a"/><rect x="265.5" y="224" width="5" height="5" fill="#0a0a0a"/><rect x="265.5" y="231" width="5" height="11" fill="#1a1a1a"/><ellipse cx="269.5" cy="237" rx="2.5" ry="3.5" fill="#e6e6e6"/><rect x="267.5" y="248" width="3" height="3" fill="#e0e0e0"/><rect x="274.5" y="135" width="1.5" height="133" fill="#b9b9b9"/><rect x="276" y="135" width="2" height="133" fill="#2a2a2a"/><rect x="278" y="135" width="5" height="95" fill="url(#bladeBar)"/><rect x="278" y="230" width="5" height="38" fill="#7a7a7a"/><rect x="283" y="135" width="2" height="133" fill="#555"/></g>
<rect x="0" y="133" width="276" height="2" fill="#333"/>
<rect x="276" y="0" width="17" height="266.5" fill="url(#sideStrip)"/>
<rect x="277" y="2" width="14" height="7" fill="#5a5a5a"/><rect x="277" y="3" width="14" height="2" fill="#888"/>
<circle cx="285" cy="75" r="3.3" fill="#111"/><circle cx="285" cy="166" r="3.3" fill="#111"/>
<path d="M282,110 L293,100 V126 Z" fill="#3a3a3a"/><path d="M282,204 L293,194 V220 Z" fill="#3a3a3a"/>
<rect x="0" y="249" width="276" height="17.5" fill="#1c1c1c"/>
<path d="M0,249 H56 L63,266.5 H0 Z" fill="#c9c9c9"/>
<rect x="5.5" y="252" width="4.5" height="12" fill="#111"/><rect x="13" y="252" width="4.5" height="12" fill="#111"/>
<rect x="29" y="255.5" width="14.5" height="6" fill="#2a62d8" stroke="#555" stroke-width="0.6"/>
<path d="M50,266.5 L62,249 H98 V266.5 Z" fill="#8a8a8a"/>
<rect x="63" y="250" width="35" height="16" fill="#2e2e2e"/><rect x="65" y="252" width="31" height="12" fill="#444"/>
<rect x="98" y="250" width="20.5" height="16.5" fill="#d9d9d9"/><rect x="100" y="256" width="16" height="3" fill="#bbb"/>
<rect x="118.5" y="249" width="157.5" height="3" fill="#a9a9a9"/>
<circle cx="141.5" cy="258" r="10.5" fill="#222" stroke="#777" stroke-width="1.6"/>
<rect x="136" y="256" width="11" height="3.5" fill="#888"/>
<path d="M218,249 H276 V266.5 H232 Z" fill="#2c2c2c"/>
<rect x="247" y="257" width="25" height="5" fill="#e0e0e0"/>
<g fill="#777"><rect x="226" y="253" width="2" height="2"/><rect x="234" y="253" width="2" height="2"/><rect x="242" y="253" width="2" height="2"/><rect x="250" y="253" width="2" height="2"/><rect x="258" y="253" width="2" height="2"/><rect x="266" y="253" width="2" height="2"/></g>
</symbol></defs>
</svg>
<div id="hdr">
  <div class="ham" style="top:51.6px"></div>
  <div class="ham" style="top:65.4px"></div>
  <div class="ham" style="top:79.2px"></div>
  
<svg class="abs" style="left:0;top:0" width="360" height="136" viewBox="0 0 360 136">
  <!-- D -->
  <path d="M111,38 H124 C136,38 141,47 141,57.5 C141,68 136,77 124,77 H111 Z M117.5,44.3 V70.7 H124 C131,70.7 134.4,65 134.4,57.5 C134.4,50 131,44.3 124,44.3 Z" fill="#ffffff" fill-rule="evenodd"/>
  <!-- E bars -->
  <rect x="146.5" y="38.4" width="24.2" height="6" fill="#ffffff"/>
  <rect x="146.5" y="53.8" width="24.2" height="6" fill="#ffffff"/>
  <rect x="146.5" y="70.7" width="24.2" height="6" fill="#ffffff"/>
  <!-- V -->
  <path d="M176,38 H183 L192.4,68 L201.8,38 H208.8 L193,78.6 Z" fill="#ffffff"/>
  <!-- I -->
  <rect x="215" y="38" width="6" height="39" fill="#ffffff"/>
  <!-- C -->
  <path d="M256,40.5 C253,38.8 250,38 246.5,38 C235,38 228,46.5 228,57.5 C228,68.5 235,77 246.5,77 C250,77 253,76.2 256,74.5 V67.6 C253.5,69.5 250.5,70.6 247,70.6 C239.5,70.6 234.6,65 234.6,57.5 C234.6,50 239.5,44.4 247,44.4 C250.5,44.4 253.5,45.5 256,47.4 Z" fill="#ffffff"/>
  <!-- slanted E -->
  <path d="M262,38.4 H290.6 L288.6,44.4 H262 Z" fill="#ffffff"/>
  <path d="M262,53.8 H284.2 L282.2,59.8 H262 Z" fill="#ffffff"/>
  <path d="M262,70.7 H277.8 L275.8,76.6 H262 Z" fill="#ffffff"/>
  <defs>
   <linearGradient id="g42" x1="0" x2="1" y1="0" y2="1"><stop offset="0" stop-color="#ee7430"/><stop offset="1" stop-color="#f69a1e"/></linearGradient><linearGradient id="g2" x1="0" x2="1" y1="0" y2="1"><stop offset="0" stop-color="#f49f1a"/><stop offset="1" stop-color="#f7c20c"/></linearGradient>
  </defs>
  <!-- 4 -->
  <path d="M300.5,37.2 H307.2 L293.6,64.8 H315 V70.3 H309.7 V77.5 H303.4 V70.3 H286.3 V65.3 Z M303.4,53.5 V64.8 H309.7 V53.5 Z" fill="url(#g42)"/>
  <!-- 2 -->
  <path d="M316.2,46 C318.5,40.2 323.4,37.2 329,37.2 C336.5,37.2 341.5,42 341.5,49 C341.5,54.5 338.5,58.5 334.5,62 L325,70.8 H341.8 V77 H315.5 V71.5 L330.5,57.5 C333.5,54.7 335,52.2 335,49.3 C335,45.6 332.6,43.2 329,43.2 C325.8,43.2 323.3,45.2 322,48.6 Z" fill="url(#g2)"/>
</svg>
  <div id="tag">A Freshworks Company</div>
  
<svg class="abs" style="left:1480px;top:0" width="888" height="136" viewBox="1480 0 888 136">
  <g fill="none" stroke="#ffffff" stroke-width="3" stroke-linecap="round" stroke-linejoin="round">
    <circle cx="1535.8" cy="65.2" r="14.8"/>
    <line x1="1546.6" y1="76.2" x2="1558.3" y2="87.8"/>
    <circle cx="1641.6" cy="66.4" r="19" stroke-width="3"/>
    <ellipse cx="1641.6" cy="66.4" rx="9.2" ry="19" stroke-width="2.6"/>
    <line x1="1623.5" y1="60.5" x2="1659.7" y2="60.5" stroke-width="2.6"/>
    <line x1="1623.5" y1="74.6" x2="1659.7" y2="74.6" stroke-width="2.6"/>
    <path d="M1733.7,79.7 H1764.5 L1760.6,73.5 C1759.6,71.5 1759.3,68.5 1759.3,65.5 C1759.3,58.8 1755,54.8 1748.7,54.8 C1742.4,54.8 1738.2,58.8 1738.2,65.5 C1738.2,68.5 1737.9,71.5 1736.9,73.5 Z" stroke-width="3.5"/>
    <circle cx="2068.3" cy="66.8" r="18.6" stroke-width="2.8"/>
    <path d="M2061.6,60 C2062,56.6 2064.8,54.8 2068.3,54.8 C2072,54.8 2075,57 2075,60.5 C2075,64.6 2068.6,65.6 2068,70.5" stroke-width="2.8"/>
    <path d="M2161.6,86 V51 C2161.6,49.3 2162.8,48.8 2164.3,48.8 H2185.6 C2187.1,48.8 2188.4,49.3 2188.4,51 V86 L2175,77 Z" stroke-width="2.6"/>
    <path d="M1957.58,55.42 L1958.87,50.86 L1965.53,50.86 L1966.82,55.42 Q1968.80,57.43 1971.52,58.13 L1976.12,56.97 L1979.45,62.74 L1976.14,66.14 Q1975.39,68.85 1976.14,71.56 L1979.45,74.96 L1976.12,80.73 L1971.52,79.57 Q1968.80,80.27 1966.82,82.28 L1965.53,86.84 L1958.87,86.84 L1957.58,82.28 Q1955.60,80.27 1952.88,79.57 L1948.28,80.73 L1944.95,74.96 L1948.26,71.56 Q1949.01,68.85 1948.26,66.14 L1944.95,62.74 L1948.28,56.97 L1952.88,58.13 Q1955.60,57.43 1957.58,55.42 Z" stroke-width="2.6"/>
    <circle cx="1962.2" cy="68.9" r="5.6" stroke-width="2.6"/>
  </g>
  <circle cx="1748.7" cy="50.9" r="2.4" fill="#ffffff"/>
  <path d="M1743.8,84.2 A5.2,5.2 0 0 0 1754.2,84.2 Z" fill="#ffffff"/>
  <circle cx="2067.5" cy="76.3" r="2" fill="#ffffff"/>
  <rect x="1812.2" y="40" width="86" height="54" rx="27" fill="#0874e8"/>
  <circle cx="1838.4" cy="66.9" r="22.4" fill="#ffffff"/>
  <circle cx="1876.4" cy="67.2" r="5.7" fill="#ffffff"/>
  <g fill="#ffffff">
    <circle cx="1887.4" cy="67.2" r="1.9"/><circle cx="1865.4" cy="67.2" r="1.9"/>
    <circle cx="1876.4" cy="56.2" r="1.9"/><circle cx="1876.4" cy="78.2" r="1.9"/>
    <circle cx="1884.2" cy="59.4" r="1.9"/><circle cx="1868.6" cy="59.4" r="1.9"/>
    <circle cx="1884.2" cy="75" r="1.9"/><circle cx="1868.6" cy="75" r="1.9"/>
  </g>
  <rect x="2250" y="29" width="71" height="71" rx="24" fill="#e4e6e9"/>
</svg>
<svg class="abs" style="left:2250px;top:29px" width="71" height="71" viewBox="2250 29 71 71"><path d="M2274,77 L2282.3,52 H2286.1 L2294.4,77 H2290.4 L2288.8,72 H2279.6 L2278,77 Z M2280.8,68.6 H2287.6 L2284.2,58.2 Z" fill="#1b1b1b" fill-rule="evenodd"/></svg>

</div>
<div id="hdrline"></div>
<div class="abs" style="left:45px;top:190.51px;font-size:32px;line-height:38.40px;color:#0a73e6;white-space:nowrap;font-weight:normal;letter-spacing:-1.2px;-webkit-text-stroke:0.3px #0a73e6">Rooms</div><svg class="abs" style="left:150px;top:203px" width="13" height="19" viewBox="0 0 13 19"><path d="M3,3.5 L9,9.5 L3,15.5" fill="none" stroke="#6f7f8a" stroke-width="3"/></svg><div class="abs" style="left:169.5px;top:190.51px;font-size:32px;line-height:38.40px;color:#0a73e6;white-space:nowrap;font-weight:normal;letter-spacing:-0.3px;-webkit-text-stroke:0.3px #0a73e6">Corner Room @ CT - New Haven</div><svg class="abs" style="left:649px;top:203px" width="13" height="19" viewBox="0 0 13 19"><path d="M3,3.5 L9,9.5 L3,15.5" fill="none" stroke="#6f7f8a" stroke-width="3"/></svg><div class="abs" style="left:670px;top:190.51px;font-size:32px;line-height:38.40px;color:#6b7a86;white-space:nowrap;font-weight:normal;letter-spacing:-0.26px;-webkit-text-stroke:0.3px #6b7a86">Room Layout</div><div id="card"><div id="inner"><div class="abs" style="left:81.5px;top:305.26px;font-size:31px;line-height:37.20px;color:#0b1d58;white-space:nowrap;font-weight:bold;letter-spacing:-1.5px">Zoom:</div>
<div class="abs" style="left:187px;top:305.26px;font-size:31px;line-height:37.20px;color:#0873e6;white-space:nowrap;font-weight:normal;letter-spacing:-0.5px;-webkit-text-stroke:0.3px #0873e6">%100</div>
<div class="abs" style="left:291px;top:322px;width:444px;height:14px;border-radius:7px;background:#0574e8;box-shadow:0 0 0 1.6px #dfe0e2"></div>
<div class="abs" style="left:408px;top:312.2px;width:30.4px;height:30.4px;border-radius:50%;background:#fff;border:6.8px solid #dfe2e6;box-shadow:0 0 1.5px rgba(0,0,0,0.2)"></div>
<div class="abs" style="left:78px;top:375.5px;width:2240px;height:2px;background:#dde1e5"></div>
<div class="abs" style="left:2248px;top:291px;width:66px;height:66px;border-radius:50%;background:#dfe2e6"></div>
<svg class="abs" style="left:2248px;top:291px" width="66" height="66" viewBox="0 0 66 66"><g fill="none" stroke="#0873e6" stroke-width="4.2" stroke-linecap="round" stroke-linejoin="round">
<path d="M22,27.5 V22.5 H27"/><path d="M39,22.5 H44 V27.5"/><path d="M44,38.5 V43.5 H39"/><path d="M27,43.5 H22 V38.5"/></g></svg>
<div class="abs" style="left:87px;top:419px;width:2300px;height:69px;background:#dfe2e6"></div>
<div class="abs" style="left:87px;top:488px;width:68.5px;height:1000px;background:#dfe2e6"></div>
<div class="abs" style="left:155.5px;top:488px;width:2250px;height:1000px;background:#f8f9f9"></div>
<div class="gl" style="left:310.5px;top:488px;width:2px;height:1000px"></div>
<div class="gl" style="left:466.0px;top:488px;width:2px;height:1000px"></div>
<div class="gl" style="left:621.5px;top:488px;width:2px;height:1000px"></div>
<div class="gl" style="left:777.0px;top:488px;width:2px;height:1000px"></div>
<div class="gl" style="left:932.5px;top:488px;width:2px;height:1000px"></div>
<div class="gl" style="left:1088.0px;top:488px;width:2px;height:1000px"></div>
<div class="gl" style="left:1243.5px;top:488px;width:2px;height:1000px"></div>
<div class="gl" style="left:1399.0px;top:488px;width:2px;height:1000px"></div>
<div class="gl" style="left:1554.5px;top:488px;width:2px;height:1000px"></div>
<div class="gl" style="left:1710.0px;top:488px;width:2px;height:1000px"></div>
<div class="gl" style="left:1865.5px;top:488px;width:2px;height:1000px"></div>
<div class="gl" style="left:2021.0px;top:488px;width:2px;height:1000px"></div>
<div class="gl" style="left:2176.5px;top:488px;width:2px;height:1000px"></div>
<div class="gl" style="left:2332.0px;top:488px;width:2px;height:1000px"></div>
<div class="gl" style="left:155.5px;top:641.5px;width:2250px;height:2px"></div>
<div class="gl" style="left:155.5px;top:797.0px;width:2250px;height:2px"></div>
<div class="gl" style="left:155.5px;top:952.5px;width:2250px;height:2px"></div>
<div class="gl" style="left:155.5px;top:1108.0px;width:2250px;height:2px"></div>
<div class="gl" style="left:155.5px;top:1263.5px;width:2250px;height:2px"></div>
<div class="gl" style="left:155.5px;top:1419.0px;width:2250px;height:2px"></div>
<div class="colh" style="left:156.0px">A</div>
<div class="colh" style="left:311.5px">B</div>
<div class="colh" style="left:467.0px">C</div>
<div class="colh" style="left:622.5px">D</div>
<div class="colh" style="left:778.0px">E</div>
<div class="colh" style="left:933.5px">F</div>
<div class="colh" style="left:1089.0px">G</div>
<div class="colh" style="left:1244.5px">H</div>
<div class="colh" style="left:1400.0px">I</div>
<div class="colh" style="left:1555.5px">J</div>
<div class="colh" style="left:1711.0px">K</div>
<div class="colh" style="left:1866.5px">L</div>
<div class="colh" style="left:2022.0px">M</div>
<div class="colh" style="left:2177.5px">N</div>
<div class="rowh" style="top:487.0px;line-height:155.5px">1</div>
<div class="rowh" style="top:642.5px;line-height:155.5px">2</div>
<div class="rowh" style="top:798.0px;line-height:155.5px">3</div>
<div class="rowh" style="top:953.5px;line-height:155.5px">4</div>
<div class="rowh" style="top:1109.0px;line-height:155.5px">5</div>
<div class="rowh" style="top:1264.5px;line-height:155.5px">6</div>
<div class="abs" style="left:325.8px;top:486px;width:156.5px;height:175px;border:2px solid #dde1e5;border-top:none"></div>
<div class="gl" style="left:498.5px;top:488px;width:2px;height:155px"></div>
<svg class="abs" style="left:156.4px;top:488.6px" width="150.8" height="152.2" viewBox="0 0 150.8 152.2"><polygon points="0,0 150.8,0 150.8,152.2 0,152.2" fill="#0274e8" stroke="#dde1e5" stroke-width="1"/></svg>
<div class="rack" style="left:157.5px;top:488.6px;width:149.5px;height:152.2px;line-height:152.2px;text-align:left;font-size:22px">Marco_test_Pa</div>
<svg class="abs" style="left:327.9px;top:488.6px" width="152.1" height="152.2" viewBox="0 0 152.1 152.2"><polygon points="0,0 115.1,0 152.1,37 152.1,115.19999999999999 115.1,152.2 0,152.2" fill="#da1c1f" stroke="#dde1e5" stroke-width="1"/></svg><div class="rack" style="left:327.9px;top:488.6px;width:152.1px;height:152.2px;line-height:152.2px">CHI-DC1-01</div>
<div class="abs" style="left:310.4px;top:781.6px;width:156.3px;height:156.8px;border:2px solid #dde1e5"></div>
<svg class="abs" style="left:312px;top:783.7px" width="153" height="153.8" viewBox="0 0 153 153.8"><polygon points="37,0 153,0 153,153.8 37,153.8 0,116.80000000000001 0,37" fill="#f5be08" stroke="#dde1e5" stroke-width="1"/></svg><div class="rack" style="left:312px;top:783.7px;width:153px;height:153.8px;line-height:153.8px">RA101</div>
<svg class="abs" style="left:312px;top:955px" width="153" height="153" viewBox="0 0 153 153"><polygon points="37,0 153,0 153,153 37,153 0,116 0,37" fill="#0cba03" stroke="#dde1e5" stroke-width="1"/></svg><div class="rack" style="left:312px;top:955px;width:153px;height:153px;line-height:153px">CHI-DC1-03</div>
<svg class="abs" style="left:312px;top:1265.3px" width="153" height="153" viewBox="0 0 153 153"><polygon points="37,0 153,0 153,153 37,153 0,116 0,37" fill="#0cba03" stroke="#dde1e5" stroke-width="1"/></svg><div class="rack" style="left:312px;top:1265.3px;width:153px;height:153px;line-height:153px">CHI-DC1-06</div>
<svg class="abs" style="left:312px;top:1421.6px" width="153" height="153" viewBox="0 0 153 153"><polygon points="37,0 153,0 153,153 37,153 0,116 0,37" fill="#0cba03" stroke="#dde1e5" stroke-width="1"/></svg>
<svg class="abs" style="left:1885px;top:1422px" width="136" height="153" viewBox="0 0 136 153"><polygon points="0,0 99,0 136,37 136,153 0,153" fill="#0cba03" stroke="#dde1e5" stroke-width="1"/></svg>
<div class="abs" style="left:502.5px;top:488px;width:1382.5px;height:1100px;background:#fff;border:1.5px solid #e2e2e2;border-bottom:none;border-radius:5px 5px 0 0"></div>
<div class="abs" style="left:578.3px;top:513.81px;font-size:24.5px;line-height:29.40px;color:#0873e6;white-space:nowrap;font-weight:normal;letter-spacing:-0.52px">CHI-DC1-01 - Front</div>
<div class="abs" style="left:982.7px;top:513.81px;font-size:24.5px;line-height:29.40px;color:#0873e6;white-space:nowrap;font-weight:normal;letter-spacing:-0.5px">CHI-DC1-01 - Back</div>
<div class="gl" style="left:526px;top:560px;width:302px;height:1.5px"></div>
<div class="gl" style="left:533px;top:560px;width:2px;height:1000px"></div>
<div class="gl" style="left:826.5px;top:560px;width:1.5px;height:1000px"></div>
<div class="gl" style="left:936px;top:560px;width:310px;height:1.5px"></div>
<div class="gl" style="left:936px;top:560px;width:1.5px;height:1000px"></div>
<div class="gl" style="left:1229.5px;top:560px;width:2px;height:1000px"></div>
<div class="tick" style="left:526px;top:586.50px;width:8px"></div>
<div class="tick" style="left:1230px;top:586.50px;width:16px"></div>
<div class="num" style="top:565.93px">41</div>
<div class="tick" style="left:526px;top:613.15px;width:8px"></div>
<div class="tick" style="left:1230px;top:613.15px;width:16px"></div>
<div class="num" style="top:592.58px">40</div>
<div class="tick" style="left:526px;top:639.80px;width:8px"></div>
<div class="tick" style="left:1230px;top:639.80px;width:16px"></div>
<div class="num" style="top:619.23px">39</div>
<div class="tick" style="left:526px;top:666.45px;width:8px"></div>
<div class="tick" style="left:1230px;top:666.45px;width:16px"></div>
<div class="num" style="top:645.88px">38</div>
<div class="tick" style="left:526px;top:693.10px;width:8px"></div>
<div class="tick" style="left:1230px;top:693.10px;width:16px"></div>
<div class="num" style="top:672.53px">37</div>
<div class="tick" style="left:526px;top:719.75px;width:8px"></div>
<div class="tick" style="left:1230px;top:719.75px;width:16px"></div>
<div class="num" style="top:699.18px">36</div>
<div class="tick" style="left:526px;top:746.40px;width:8px"></div>
<div class="tick" style="left:1230px;top:746.40px;width:16px"></div>
<div class="num" style="top:725.83px">35</div>
<div class="tick" style="left:526px;top:773.05px;width:8px"></div>
<div class="tick" style="left:1230px;top:773.05px;width:16px"></div>
<div class="num" style="top:752.48px">34</div>
<div class="tick" style="left:526px;top:799.70px;width:8px"></div>
<div class="tick" style="left:1230px;top:799.70px;width:16px"></div>
<div class="num" style="top:779.12px">33</div>
<div class="tick" style="left:526px;top:826.35px;width:8px"></div>
<div class="tick" style="left:1230px;top:826.35px;width:16px"></div>
<div class="num" style="top:805.78px">32</div>
<div class="tick" style="left:526px;top:853.00px;width:8px"></div>
<div class="tick" style="left:1230px;top:853.00px;width:16px"></div>
<div class="num" style="top:832.43px">31</div>
<div class="tick" style="left:526px;top:879.65px;width:8px"></div>
<div class="tick" style="left:1230px;top:879.65px;width:16px"></div>
<div class="num" style="top:859.08px">30</div>
<div class="tick" style="left:526px;top:906.30px;width:8px"></div>
<div class="tick" style="left:1230px;top:906.30px;width:16px"></div>
<div class="num" style="top:885.73px">29</div>
<div class="tick" style="left:526px;top:932.95px;width:8px"></div>
<div class="tick" style="left:1230px;top:932.95px;width:16px"></div>
<div class="num" style="top:912.38px">28</div>
<div class="tick" style="left:526px;top:959.60px;width:8px"></div>
<div class="tick" style="left:1230px;top:959.60px;width:16px"></div>
<div class="num" style="top:939.03px">27</div>
<div class="tick" style="left:526px;top:986.25px;width:8px"></div>
<div class="tick" style="left:1230px;top:986.25px;width:16px"></div>
<div class="num" style="top:965.68px">26</div>
<div class="tick" style="left:526px;top:1012.90px;width:8px"></div>
<div class="tick" style="left:1230px;top:1012.90px;width:16px"></div>
<div class="num" style="top:992.33px">25</div>
<div class="tick" style="left:526px;top:1039.55px;width:8px"></div>
<div class="tick" style="left:1230px;top:1039.55px;width:16px"></div>
<div class="num" style="top:1018.97px">24</div>
<div class="tick" style="left:526px;top:1066.20px;width:8px"></div>
<div class="tick" style="left:1230px;top:1066.20px;width:16px"></div>
<div class="num" style="top:1045.62px">23</div>
<div class="tick" style="left:526px;top:1092.85px;width:8px"></div>
<div class="tick" style="left:1230px;top:1092.85px;width:16px"></div>
<div class="num" style="top:1072.28px">22</div>
<div class="tick" style="left:526px;top:1119.50px;width:8px"></div>
<div class="tick" style="left:1230px;top:1119.50px;width:16px"></div>
<div class="num" style="top:1098.92px">21</div>
<div class="tick" style="left:526px;top:1146.15px;width:8px"></div>
<div class="tick" style="left:1230px;top:1146.15px;width:16px"></div>
<div class="num" style="top:1125.58px">20</div>
<div class="tick" style="left:526px;top:1172.80px;width:8px"></div>
<div class="tick" style="left:1230px;top:1172.80px;width:16px"></div>
<div class="num" style="top:1152.23px">19</div>
<div class="tick" style="left:526px;top:1199.45px;width:8px"></div>
<div class="tick" style="left:1230px;top:1199.45px;width:16px"></div>
<div class="num" style="top:1178.88px">18</div>
<div class="tick" style="left:526px;top:1226.10px;width:8px"></div>
<div class="tick" style="left:1230px;top:1226.10px;width:16px"></div>
<div class="num" style="top:1205.52px">17</div>
<div class="tick" style="left:526px;top:1252.75px;width:8px"></div>
<div class="tick" style="left:1230px;top:1252.75px;width:16px"></div>
<div class="num" style="top:1232.17px">16</div>
<div class="tick" style="left:526px;top:1279.40px;width:8px"></div>
<div class="tick" style="left:1230px;top:1279.40px;width:16px"></div>
<div class="num" style="top:1258.83px">15</div>
<div class="tick" style="left:526px;top:1306.05px;width:8px"></div>
<div class="tick" style="left:1230px;top:1306.05px;width:16px"></div>
<div class="num" style="top:1285.48px">14</div>
<div class="tick" style="left:526px;top:1332.70px;width:8px"></div>
<div class="tick" style="left:1230px;top:1332.70px;width:16px"></div>
<div class="num" style="top:1312.12px">13</div>
<div class="tick" style="left:526px;top:1359.35px;width:8px"></div>
<div class="tick" style="left:1230px;top:1359.35px;width:16px"></div>
<div class="num" style="top:1338.77px">12</div>
<div class="tick" style="left:526px;top:1386.00px;width:8px"></div>
<div class="tick" style="left:1230px;top:1386.00px;width:16px"></div>
<div class="num" style="top:1365.42px">11</div>
<div class="tick" style="left:526px;top:1412.65px;width:8px"></div>
<div class="tick" style="left:1230px;top:1412.65px;width:16px"></div>
<div class="num" style="top:1392.08px">10</div>
<div class="tick" style="left:526px;top:1439.30px;width:8px"></div>
<div class="tick" style="left:1230px;top:1439.30px;width:16px"></div>
<div class="num" style="top:1418.73px">9</div>
<div class="tick" style="left:526px;top:1465.95px;width:8px"></div>
<div class="tick" style="left:1230px;top:1465.95px;width:16px"></div>
<div class="num" style="top:1445.38px">8</div>
<svg class="abs" style="left:534px;top:587.25px" width="293" height="26.65"><use href="#srv" width="293" height="26.65"/></svg>
<div class="lbl" style="left:625.3px;top:590.0px;width:110px;height:21.6px;line-height:18.6px">DeviceTOM2</div>
<svg class="abs" style="left:534px;top:667.20px" width="293" height="53.30"><use href="#ppFront" width="293" height="53.30"/></svg>
<div class="lbl" style="left:578.4px;top:683.0px;width:204px;height:22px;line-height:19px">test42-panel - Patch Panel</div>
<svg class="abs" style="left:534px;top:773.80px" width="293" height="53.30"><use href="#photo" width="293" height="53.30"/></svg>
<svg class="abs" style="left:534px;top:853.75px" width="293" height="53.30"><use href="#srv" width="293" height="53.30"/></svg>
<div class="lbl" style="left:624.8px;top:869.3px;width:111px;height:22px;line-height:19px">Newly Added</div>
<svg class="abs" style="left:534px;top:933.70px" width="293" height="26.65"><use href="#photo" width="293" height="26.65"/></svg>
<svg class="abs" style="left:534px;top:987.00px" width="293" height="53.30"><use href="#srv" width="293" height="53.30"/></svg>
<div class="lbl" style="left:640.8px;top:1003.0px;width:79px;height:22px;line-height:19px">testports</div>
<svg class="abs" style="left:534px;top:1040.30px" width="293" height="26.65"><use href="#srv" width="293" height="26.65"/></svg>
<div class="lbl" style="left:652.3px;top:1043.2px;width:56px;height:21.5px;line-height:18.5px">apic1</div>
<svg class="abs" style="left:534px;top:1066.95px" width="293" height="266.50"><use href="#chassis" width="293" height="266.50"/></svg>
<div class="lbl" style="left:633.4px;top:1189.0px;width:94px;height:22px;line-height:19px">chassis-02</div>
<svg class="abs" style="left:534px;top:1333.3px" width="293" height="140"><use href="#cisco" width="293" height="140"/></svg>
<svg class="abs" style="left:937.5px;top:587.25px" width="292" height="26.65"><use href="#photo" width="292" height="26.65"/></svg>
<svg class="abs" style="left:937.5px;top:667.20px" width="292" height="53.30"><use href="#ppBack" width="292" height="53.30"/></svg>
<svg class="abs" style="left:937.5px;top:773.80px" width="292" height="53.30"><use href="#srv" width="292" height="53.30"/></svg>
<div class="lbl" style="left:1022.5px;top:789.5px;width:121px;height:22px;line-height:19px">new-device-01</div>
<svg class="abs" style="left:937.5px;top:853.75px;opacity:0.36" width="292" height="53.30"><use href="#photo" width="292" height="53.30"/></svg>
<svg class="abs" style="left:937.5px;top:933.70px" width="292" height="26.65"><use href="#srv" width="292" height="26.65"/></svg>
<div class="lbl" style="left:1023.0px;top:936.2px;width:120px;height:22px;line-height:19px">USNHCTGW1</div>
<svg class="abs" style="left:937.5px;top:987.00px;opacity:0.36" width="292" height="53.30"><use href="#photo" width="292" height="53.30"/></svg>
<svg class="abs" style="left:937.5px;top:1040.30px" width="292" height="26.65"><use href="#photo" width="292" height="26.65"/></svg>
<svg class="abs" style="left:937.5px;top:1066.95px" width="292" height="266.50"><use href="#chassis" width="292" height="266.50"/></svg>
<svg class="abs" style="left:937.5px;top:1333.3px" width="292" height="140"><use href="#teal" width="292" height="140"/></svg>
<div class="abs" style="left:1293.6px;top:509.4px;width:449.4px;height:480.3px;border:5px solid #f0283c;border-radius:3px"></div>
<div class="abs" style="left:1305px;top:519.69px;font-size:31.5px;line-height:37.80px;color:#1c1c1c;white-space:nowrap;font-weight:normal;letter-spacing:-0.85px;-webkit-text-stroke:0.35px #1c1c1c">Name: CHI-DC1-01</div>
<div class="abs" style="left:1305px;top:572.39px;font-size:31.5px;line-height:37.80px;color:#1c1c1c;white-space:nowrap;font-weight:normal;letter-spacing:-0.85px;-webkit-text-stroke:0.35px #1c1c1c">Size: 42</div>
<div class="abs" style="left:1305px;top:625.09px;font-size:31.5px;line-height:37.80px;color:#1c1c1c;white-space:nowrap;font-weight:normal;letter-spacing:-0.85px;-webkit-text-stroke:0.35px #1c1c1c">Vendor:</div>
<div class="abs" style="left:1305px;top:677.79px;font-size:31.5px;line-height:37.80px;color:#1c1c1c;white-space:nowrap;font-weight:normal;letter-spacing:-0.85px;-webkit-text-stroke:0.35px #1c1c1c">Available (Us): 8</div>
<div class="abs" style="left:1305px;top:730.49px;font-size:31.5px;line-height:37.80px;color:#1c1c1c;white-space:nowrap;font-weight:normal;letter-spacing:-0.85px;-webkit-text-stroke:0.35px #1c1c1c">Number of Devices: 8</div>
<div class="abs" style="left:1305px;top:783.19px;font-size:31.5px;line-height:37.80px;color:#1c1c1c;white-space:nowrap;font-weight:normal;letter-spacing:-0.85px;-webkit-text-stroke:0.35px #1c1c1c">Total Power Ports:</div>
<div class="abs" style="left:1305px;top:835.89px;font-size:31.5px;line-height:37.80px;color:#1c1c1c;white-space:nowrap;font-weight:normal;letter-spacing:-0.85px;-webkit-text-stroke:0.35px #1c1c1c">Open Power Ports:</div>
<div class="abs" style="left:1305px;top:888.59px;font-size:31.5px;line-height:37.80px;color:#1c1c1c;white-space:nowrap;font-weight:normal;letter-spacing:-0.85px;-webkit-text-stroke:0.35px #1c1c1c">Tags: Development, App, rack</div>
<div class="abs" style="left:1305px;top:941.29px;font-size:31.5px;line-height:37.80px;color:#1c1c1c;white-space:nowrap;font-weight:normal;letter-spacing:-0.85px;-webkit-text-stroke:0.35px #1c1c1c">Notes:</div>
<svg class="abs" style="left:1846px;top:514px" width="24" height="22" viewBox="0 0 24 22"><g stroke="#cc0f14" stroke-width="3.3" stroke-linecap="round"><line x1="6.5" y1="6" x2="17" y2="16"/><line x1="17" y1="6" x2="6.5" y2="16"/></g></svg>
<div class="abs" style="left:1305px;top:995.19px;font-size:31.5px;line-height:37.80px;color:#0873e6;white-space:nowrap;font-weight:normal;letter-spacing:-0.9px;-webkit-text-stroke:0.3px #0873e6">View CHI-DC1-01 Layout</div>
<div class="abs" style="left:1305px;top:1047.89px;font-size:31.5px;line-height:37.80px;color:#0873e6;white-space:nowrap;font-weight:normal;letter-spacing:-0.9px;-webkit-text-stroke:0.3px #0873e6">View CHI-DC1-01 Power Unit Map</div>
<div class="abs" style="left:1305px;top:1099.79px;font-size:31.5px;line-height:37.80px;color:#0873e6;white-space:nowrap;font-weight:normal;letter-spacing:-0.9px;-webkit-text-stroke:0.3px #0873e6">View CHI-DC1-01 details</div>
<div class="abs" style="left:1305px;top:1152.69px;font-size:31.5px;line-height:37.80px;color:#0873e6;white-space:nowrap;font-weight:normal;letter-spacing:-0.9px;-webkit-text-stroke:0.3px #0873e6">Power/Utilization Charts</div>
<div class="btn" style="left:1304px;width:270px"></div>
<div class="btn" style="left:1580.3px;width:281.5px"></div>
<div class="abs" style="left:1344px;top:1221.99px;font-size:31.5px;line-height:37.80px;color:#ffffff;white-space:nowrap;font-weight:normal;letter-spacing:-0.6px;-webkit-text-stroke:0.3px #ffffff">Rotate 90 deg</div>
<div class="abs" style="left:1618px;top:1221.99px;font-size:31.5px;line-height:37.80px;color:#ffffff;white-space:nowrap;font-weight:normal;letter-spacing:-0.6px;-webkit-text-stroke:0.3px #ffffff">Rotate 180 deg</div>
<div class="abs" style="left:2334px;top:378px;width:13px;height:617px;border-radius:7px;background:rgba(160,160,160,0.6)"></div>
<div class="abs" style="left:44px;top:1455px;width:1857px;height:13px;border-radius:7px;background:rgba(160,160,160,0.58)"></div></div></div>
</body></html>
